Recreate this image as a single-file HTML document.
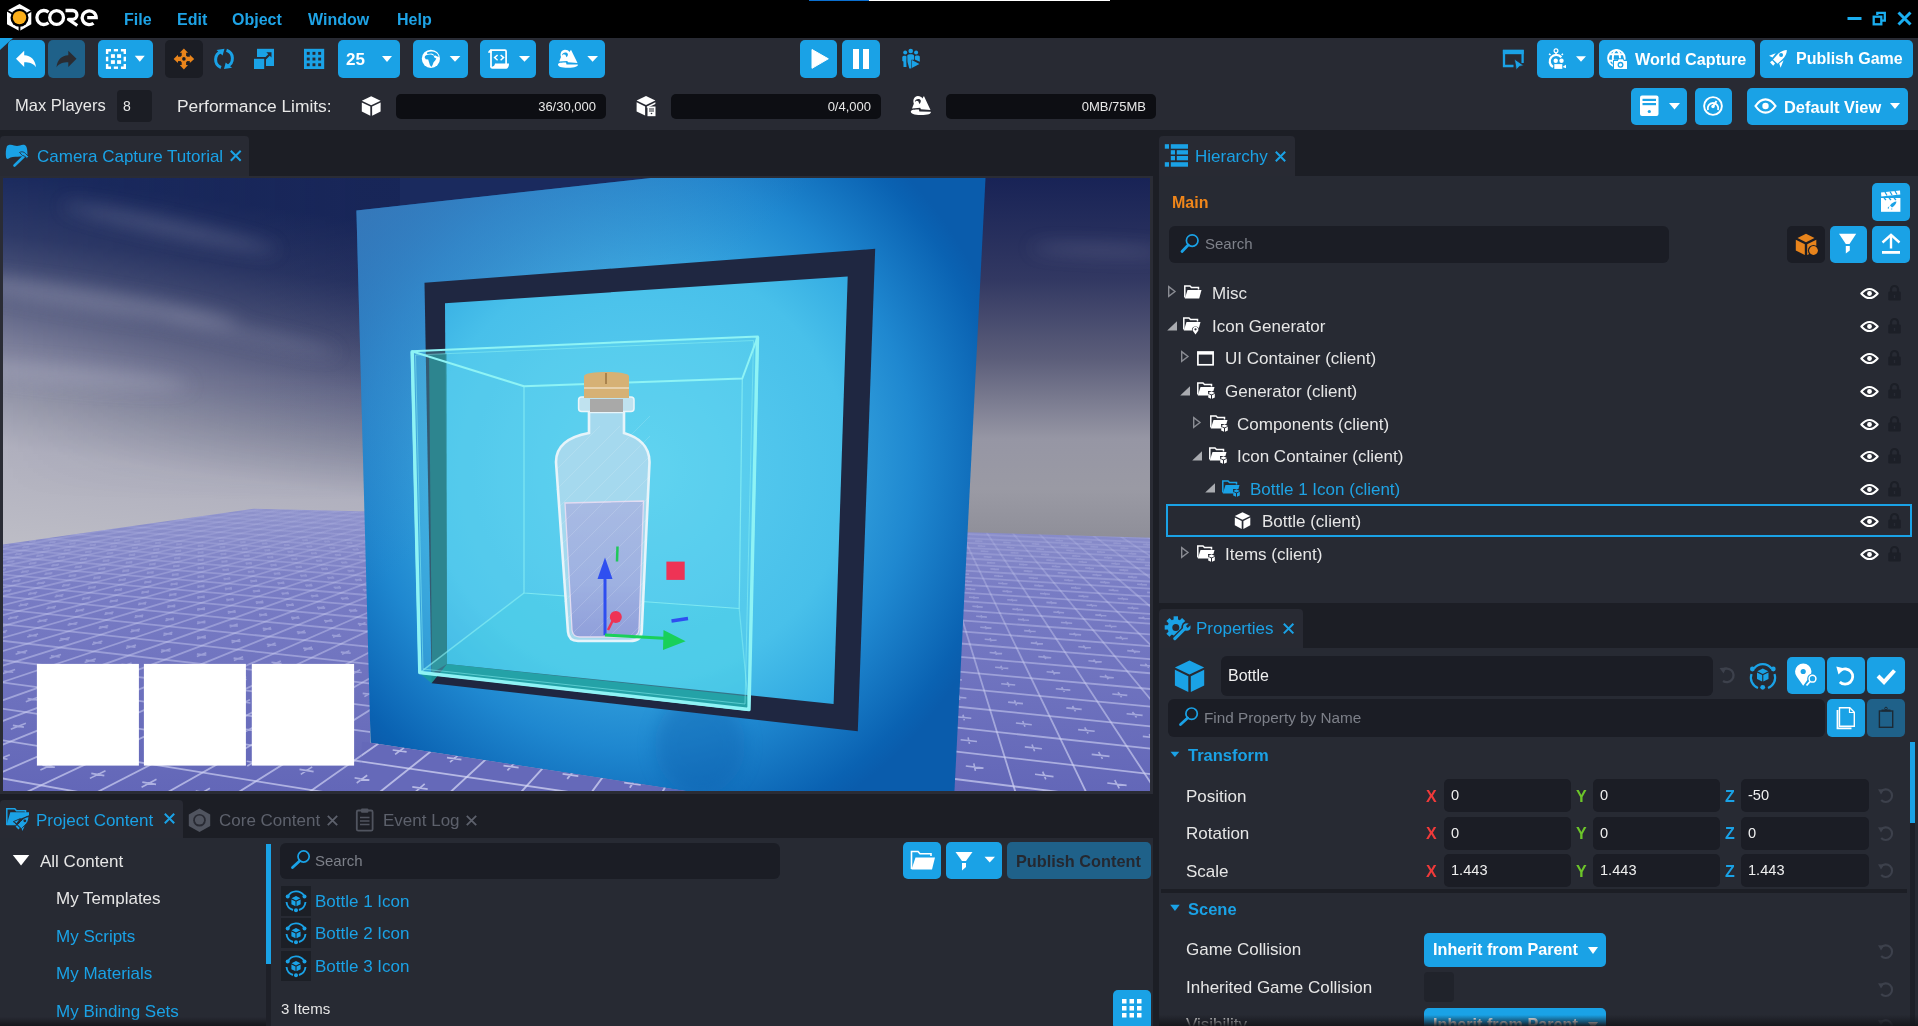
<!DOCTYPE html>
<html><head><meta charset="utf-8">
<style>
*{box-sizing:border-box;margin:0;padding:0}
html,body{width:1918px;height:1026px;overflow:hidden;background:#1c1e25;font-family:"Liberation Sans",sans-serif;color:#e8e8e8}
.a{position:absolute}
.t{position:absolute;white-space:pre;line-height:1;will-change:transform}
.btn{position:absolute;background:#1aa2e6;border-radius:5px}
.blue{color:#1ea3e4}
svg{position:absolute;overflow:visible}
.tri{position:absolute;width:0;height:0;border-left:5.5px solid transparent;border-right:5.5px solid transparent;border-top:6px solid #fff}
</style></head><body>
<!-- MENU BAR -->
<div class="a" style="left:0;top:0;width:1918px;height:38px;background:#000"></div>
<div class="a" style="left:809px;top:0;width:60px;height:1px;background:#0a6fd0"></div>
<div class="a" style="left:869px;top:0;width:241px;height:1px;background:#fff"></div>

<!-- TOOLBAR -->
<div class="a" style="left:0;top:38px;width:1918px;height:92px;background:#282a33"></div>


<!-- LOGO -->
<svg style="left:0;top:0" width="110" height="38" viewBox="0 0 110 38">
 <polygon points="19.5,4 31.3,10.7 31.3,24.3 19.5,31 7,24.3 7,10.7" fill="#fff"/>
 <circle cx="19.5" cy="17.8" r="9" fill="#000"/>
 <path d="M19.5 17.8 L19.5 32 M19.5 17.8 L6 10 M19.5 17.8 L33 10" stroke="#000" stroke-width="1.8"/>
 <circle cx="19.5" cy="17.6" r="6.7" fill="#fdb01a"/>
 <path d="M48.5 12.2 A7 7 0 1 0 48.5 22.8" fill="none" stroke="#fff" stroke-width="3.3"/>
 <circle cx="56.6" cy="17.5" r="6.9" fill="none" stroke="#fff" stroke-width="3.3"/>
 <path d="M65.5 10.5 L72.5 10.5 A4.3 4.3 0 0 1 72.5 19.3 L68.5 19.3 L77.3 25.5" fill="none" stroke="#fff" stroke-width="3.3" stroke-linejoin="round"/>
 <path d="M87.2 17.6 L96.2 17.6 A7 6.9 0 1 0 93.5 23.2" fill="none" stroke="#fff" stroke-width="3.3"/>
</svg>
<div class="t" style="left:124px;top:12px;font-size:16px;font-weight:bold;color:#1ea3e6">File</div>
<div class="t" style="left:177px;top:12px;font-size:16px;font-weight:bold;color:#1ea3e6">Edit</div>
<div class="t" style="left:232px;top:12px;font-size:16px;font-weight:bold;color:#1ea3e6">Object</div>
<div class="t" style="left:308px;top:12px;font-size:16px;font-weight:bold;color:#1ea3e6">Window</div>
<div class="t" style="left:397px;top:12px;font-size:16px;font-weight:bold;color:#1ea3e6">Help</div>
<!-- window controls -->
<svg style="left:1840px;top:8px" width="78" height="22" viewBox="1840 8 78 22">
 <rect x="1847.5" y="17" width="14" height="3" fill="#1aaef0"/>
 <path d="M1877.3 15 L1877.3 12.8 L1884.8 12.8 L1884.8 20.6 L1882 20.6" fill="none" stroke="#1aaef0" stroke-width="2.3"/>
 <rect x="1873.7" y="16.7" width="7.6" height="7.6" fill="none" stroke="#1aaef0" stroke-width="2.3"/>
 <path d="M1898.5 12.5 L1910.5 24.5 M1910.5 12.5 L1898.5 24.5" stroke="#1aaef0" stroke-width="3"/>
</svg>

<!-- small blue corner -->
<svg style="left:0;top:38px" width="14" height="14"><polygon points="0,0 13,0 0,12" fill="#1aa2e6"/></svg>

<!-- ROW 1 -->
<div class="btn" style="left:8px;top:40px;width:37px;height:38px"></div>
<svg style="left:8px;top:40px" width="37" height="38" viewBox="8 40 37 38"><path d="M16 58.8 L24.2 50.8 L24.2 55.3 C31 55.6 35.2 60 36 67.2 C33.2 63.3 29.5 62.3 24.2 62.3 L24.2 66.9 Z" fill="#fff"/></svg>
<div class="btn" style="left:48px;top:40px;width:37px;height:38px;background:#1f6189"></div>
<svg style="left:48px;top:40px" width="37" height="38" viewBox="48 40 37 38"><path d="M76.5 58.8 L68.3 50.8 L68.3 55.3 C61.5 55.6 57.3 60 56.5 67.2 C59.3 63.3 63 62.3 68.3 62.3 L68.3 66.9 Z" fill="#2a2c32"/></svg>

<div class="btn" style="left:98px;top:40px;width:55px;height:38px"></div>
<svg style="left:98px;top:40px" width="55" height="38" viewBox="98 40 55 38">
 <g fill="#fff">
  <path d="M105.9 49 L111 49 L111 51.4 L108.3 51.4 L108.3 54 L105.9 54 Z"/>
  <path d="M126 49 L120.9 49 L120.9 51.4 L123.6 51.4 L123.6 54 L126 54 Z"/>
  <path d="M105.9 68.9 L111 68.9 L111 66.5 L108.3 66.5 L108.3 63.9 L105.9 63.9 Z"/>
  <path d="M126 68.9 L120.9 68.9 L120.9 66.5 L123.6 66.5 L123.6 63.9 L126 63.9 Z"/>
  <rect x="113.8" y="49" width="4.2" height="2.4"/><rect x="113.8" y="66.5" width="4.2" height="2.4"/>
  <rect x="105.9" y="56.7" width="2.4" height="4.6"/><rect x="123.6" y="56.7" width="2.4" height="4.6"/>
  <rect x="110.9" y="54.2" width="4" height="3.7"/><rect x="117.1" y="54.2" width="4" height="3.7"/>
  <rect x="110.9" y="60.2" width="4" height="3.7"/><rect x="117.1" y="60.2" width="4" height="3.7"/>
 </g>
 <polygon points="134.8,55.8 144.8,55.8 139.8,61.7" fill="#fff"/>
</svg>

<div class="a" style="left:165px;top:40px;width:38px;height:38px;background:#1b1d24;border-radius:5px"></div>
<svg style="left:165px;top:40px" width="38" height="38" viewBox="165 40 38 38">
 <g fill="#ea851b">
  <rect x="181.7" y="52" width="4.4" height="14"/><rect x="177" y="56.7" width="14" height="4.4"/>
  <polygon points="183.9,48.4 188,52.8 179.8,52.8"/><polygon points="183.9,69.4 188,65 179.8,65"/>
  <polygon points="173.6,58.9 178,54.8 178,63"/><polygon points="194.2,58.9 189.8,54.8 189.8,63"/>
  <circle cx="183.9" cy="58.9" r="3.6"/>
 </g>
 <circle cx="183.9" cy="58.9" r="1.8" fill="#1b1d24"/>
</svg>
<svg style="left:210px;top:45px" width="30" height="30" viewBox="210 45 30 30">
 <g fill="none" stroke="#1aa2e6" stroke-width="3">
  <path d="M221.5 51.5 A8.5 8.5 0 0 0 221 67.5"/>
  <path d="M226.5 50.3 A8.5 8.5 0 0 1 227 66.3"/>
 </g>
 <polygon points="216.5,50 224.5,48.8 222.6,55.5" fill="#1aa2e6"/>
 <polygon points="232,67.8 224,69 225.7,62.5" fill="#1aa2e6"/>
</svg>
<svg style="left:250px;top:45px" width="30" height="30" viewBox="250 45 30 30">
 <rect x="257" y="48.8" width="17" height="17.2" fill="#1aa2e6"/>
 <rect x="252.5" y="57" width="13.5" height="13.5" fill="#282a33"/>
 <rect x="254" y="58.8" width="10.2" height="10.2" fill="#1aa2e6"/>
 <path d="M265.5 58.5 L270 54" stroke="#282a33" stroke-width="2.2"/>
 <polygon points="271.5,52.3 271.5,57.5 266.3,52.3" fill="#282a33"/>
</svg>
<svg style="left:300px;top:45px" width="30" height="30" viewBox="300 45 30 30">
 <rect x="304" y="48.8" width="20.2" height="20.2" fill="#1aa2e6"/>
 <g fill="#282a33">
 <rect x="306.8" y="51.9" width="2.9" height="2.9"/><rect x="312.5" y="51.9" width="2.9" height="2.9"/><rect x="318.2" y="51.9" width="2.9" height="2.9"/>
 <rect x="306.8" y="57.6" width="2.9" height="2.9"/><rect x="312.5" y="57.6" width="2.9" height="2.9"/><rect x="318.2" y="57.6" width="2.9" height="2.9"/>
 <rect x="306.8" y="63.3" width="2.9" height="2.9"/><rect x="312.5" y="63.3" width="2.9" height="2.9"/><rect x="318.2" y="63.3" width="2.9" height="2.9"/>
 </g>
</svg>

<div class="btn" style="left:338px;top:40px;width:62px;height:38px"></div>
<div class="t" style="left:345.5px;top:51px;font-size:17px;font-weight:bold;color:#fff">25</div>
<div class="tri" style="left:382px;top:56px"></div>

<div class="btn" style="left:413px;top:40px;width:55px;height:38px"></div>
<svg style="left:413px;top:40px" width="55" height="38" viewBox="413 40 55 38">
 <circle cx="430.9" cy="58.8" r="9.1" fill="#fff"/>
 <path d="M424.6 57.2 C425 55.2 427.5 54.3 431 54.6 L433.6 55.6 L434.3 57.6 L436.3 58.6 L435.2 60.5 L433.6 62.2 L432.6 65 L431.4 67 L429.9 65 L428.8 61.5 L428.2 59.6 L425.7 59.3 Z" fill="#1aa2e6"/>
 <path d="M427 52.6 C429.5 51.3 433 51 435.5 52.5 C437.2 53.5 438.3 55 438.8 56.8 L437.2 56.5 L435.6 55.5 L434 55.8 L433.4 54.2 L431.5 53.6 L427.2 54 Z" fill="#1aa2e6"/>
 <polygon points="449.7,56 460.4,56 455,61.8" fill="#fff"/>
</svg>

<div class="btn" style="left:480px;top:40px;width:56px;height:38px"></div>
<svg style="left:480px;top:40px" width="56" height="38" viewBox="480 40 56 38">
 <path d="M491 67 L491 50.2 L505 50.2 C505.8 50.2 506.1 50.6 506.1 51.4 L506.1 64" fill="none" stroke="#fff" stroke-width="1.7"/>
 <path d="M488 52.8 C488.3 50.8 489.5 49.4 491.5 49.4 L491.5 52.8 Z" fill="#fff"/>
 <path d="M495 63.4 L509 63.4 C509 66.5 508 68.8 505.5 68.8 L492.5 68.8 C491 68.8 490.2 67.8 490.2 66.5 C492 67 494.8 66.5 495 63.4 Z" fill="#fff"/>
 <path d="M497.6 55 L494.6 57.6 L497.6 60.2 M500.6 55 L503.6 57.6 L500.6 60.2" fill="none" stroke="#fff" stroke-width="1.5"/>
 <polygon points="519,56 530,56 524.5,61.8" fill="#fff"/>
</svg>

<div class="btn" style="left:549px;top:40px;width:56px;height:38px"></div>
<svg style="left:549px;top:40px" width="56" height="38" viewBox="549 40 56 38">
 <path d="M559.2 61.6 L561 57 C559.7 53.5 561.5 49.8 565 49.8 C567.2 49.8 568.6 50.7 569.4 52 L571 49.8 L577.5 63 L568 62.3 L567.3 61 Z" fill="#fff"/>
 <path d="M562 55.5 C562 52.5 566.5 51.5 567.8 53.8 C568.2 55 567.5 56.5 566.5 57.3 L565.4 54.7 L563.5 54.2 Z" fill="#1aa2e6"/>
 <path d="M558 64.5 C558 62.8 562 62.6 566 62.6 L566.5 64.5 L577.8 64.6 C578.5 66.5 575 67.8 568 67.8 C561 67.8 558 66.5 558 64.5 Z" fill="#fff"/>
 <polygon points="587.3,56 598,56 592.6,61.8" fill="#fff"/>
</svg>

<!-- play/pause -->
<div class="btn" style="left:800px;top:40px;width:37px;height:38px"></div>
<svg style="left:800px;top:40px" width="37" height="38" viewBox="800 40 37 38"><path d="M812 49.5 L828.3 58.8 L812 68.3 Z" fill="#fff" stroke="#fff" stroke-width="1" stroke-linejoin="round"/></svg>
<div class="btn" style="left:842px;top:40px;width:38px;height:38px"></div>
<div class="a" style="left:853px;top:49px;width:5.6px;height:20px;background:#fff"></div>
<div class="a" style="left:863.2px;top:49px;width:5.8px;height:20px;background:#fff"></div>
<svg style="left:900px;top:47px" width="24" height="24" viewBox="900 47 24 24">
 <g fill="#1aa2e6">
  <circle cx="905.2" cy="52.6" r="2"/><circle cx="910.7" cy="51" r="2.3"/><circle cx="916.1" cy="52.6" r="2"/>
  <path d="M902.3 57 C902.3 55.6 906.2 55.2 906.5 56.4 L906.3 61.5 L906.5 67 L903.5 67 L903.4 61.5 L902.3 61 Z"/>
  <path d="M907.3 55.5 C907.8 53.8 913.5 53.8 914 55.5 L914 59.8 L911.3 59.8 L911.3 68.5 L909.3 68.5 L907.5 62 Z"/>
  <path d="M914.8 56.5 C915 55 919.5 55 919.8 56.5 L919.8 61.8 L914.8 59.5 Z"/>
  <polygon points="911.8,60 919.4,64.1 911.8,68.1"/>
 </g>
</svg>

<!-- right toolbar -->
<svg style="left:1500px;top:47px" width="28" height="26" viewBox="1500 47 28 26">
 <path d="M1513.5 66 L1504 66 L1504 51 L1522.6 51 L1522.6 63" fill="none" stroke="#1aa2e6" stroke-width="2.3" stroke-linejoin="miter"/>
 <rect x="1502.9" y="49.9" width="20.8" height="4.3" fill="#1aa2e6"/>
 <path d="M1514.4 59 L1523.8 65.6 L1519.4 66.4 L1516.3 69.9 Z" fill="#1aa2e6" stroke="#282a33" stroke-width="0.8"/>
</svg>
<div class="btn" style="left:1537px;top:40px;width:57px;height:38px"></div>
<svg style="left:1537px;top:40px" width="57" height="38" viewBox="1537 40 57 38">
 <circle cx="1556" cy="50.7" r="1.9" fill="none" stroke="#fff" stroke-width="1.2"/>
 <path d="M1556 52.6 L1556 55" stroke="#fff" stroke-width="1.5"/>
 <path d="M1561.3 57.3 A6.5 6.5 0 1 0 1553 67" fill="none" stroke="#fff" stroke-width="2.3"/>
 <path d="M1549 53.8 L1550.6 54.8 M1563 53.8 L1561.6 54.8" stroke="#fff" stroke-width="1.5"/>
 <circle cx="1555.7" cy="60.7" r="2.2" fill="#fff"/><circle cx="1561.5" cy="60.7" r="2.2" fill="#fff"/>
 <rect x="1554.3" y="64.1" width="8" height="4.8" fill="#fff"/><polygon points="1563.2,66.2 1566,64.8 1566,68.2 1563.2,67.2" fill="#fff"/>
 <polygon points="1576,56.2 1586,56.2 1581,61.7" fill="#fff"/>
</svg>

<div class="btn" style="left:1599px;top:40px;width:156px;height:38px"></div>
<svg style="left:1599px;top:40px" width="40" height="38" viewBox="1599 40 40 38">
 <g fill="none" stroke="#fff" stroke-width="1.9">
  <circle cx="1616.4" cy="58.3" r="8.3"/>
  <ellipse cx="1616.4" cy="58.3" rx="3.6" ry="8.3"/>
  <path d="M1608.8 54.3 L1624 54.3 M1608.3 60.8 L1624.5 60.8"/>
 </g>
 <path d="M1613 70 L1613 60 L1617 60 L1618 58.3 L1623.6 58.3 L1624.6 60 L1628 60 L1628 70 Z" fill="#1aa2e6"/>
 <path d="M1614 69 L1614 61.3 C1614 61.1 1614.1 61 1614.3 61 L1617.8 61 L1618.6 59.3 L1623 59.3 L1623.8 61 L1626.6 61 C1626.8 61 1627 61.1 1627 61.3 L1627 69 Z" fill="#fff"/>
 <circle cx="1620.5" cy="64.8" r="2.3" fill="none" stroke="#1aa2e6" stroke-width="1.3"/>
</svg>
<div class="t" style="left:1635px;top:51.3px;font-size:16.2px;font-weight:bold;color:#fff">World Capture</div>

<div class="btn" style="left:1760px;top:40px;width:153px;height:38px"></div>
<svg style="left:1760px;top:40px" width="36" height="38" viewBox="1760 40 36 38">
 <path d="M1786.8 50 C1784 50 1780 51.5 1777 55 L1773 59.5 L1777.5 63.8 L1782 59.8 C1785.5 56.5 1787 53 1786.8 50 Z" fill="#fff"/>
 <circle cx="1781.1" cy="55" r="2" fill="#1aa2e6"/>
 <path d="M1769 55.8 L1775.8 53.2 L1772.5 57.5 Z M1783.6 60.2 L1780.6 67.7 L1779.2 63.6 Z" fill="#fff"/>
 <polygon points="1770,62.3 1772.2,60.6 1775,63.5 1773.2,65.8" fill="#fff"/>
</svg>
<div class="t" style="left:1796px;top:51px;font-size:16px;font-weight:bold;color:#fff">Publish Game</div>

<!-- ROW 2 -->
<div class="t" style="left:15px;top:97px;font-size:16.5px;color:#e8e8e8">Max Players</div>
<div class="a" style="left:117px;top:90px;width:35px;height:32px;background:#1b1d24;border-radius:4px"></div>
<div class="t" style="left:123px;top:99px;font-size:14px;color:#e8e8e8">8</div>
<div class="t" style="left:177px;top:97.5px;font-size:17.4px;color:#e8e8e8">Performance Limits:</div>
<svg style="left:360px;top:94px" width="24" height="24" viewBox="360 94 24 24">
 <polygon points="371.2,96.2 380.6,100.8 371.2,105.2 361.8,100.8" fill="#fff"/>
 <polygon points="361.8,102.5 370.3,106.6 370.3,115.8 361.8,111.6" fill="#fff"/>
 <polygon points="380.6,102.5 372.1,106.6 372.1,115.8 380.6,111.6" fill="#fff"/>
</svg>
<div class="a" style="left:396px;top:94px;width:210px;height:25px;background:#0d0e13;border-radius:5px"></div>
<div class="t" style="left:396px;top:100px;width:200px;text-align:right;font-size:13px;color:#e8e8e8">36/30,000</div>
<svg style="left:634px;top:94px" width="24" height="24" viewBox="634 94 24 24">
 <polygon points="646,96 655.4,100.6 646,105 636.6,100.6" fill="#fff"/>
 <polygon points="636.6,102.3 645.1,106.4 645.1,115.6 636.6,111.4" fill="#fff"/>
 <polygon points="655.4,102.3 646.9,106.4 646.9,108 655.4,104" fill="#fff"/>
 <rect x="647.5" y="106.5" width="8" height="9.7" fill="#fff"/>
 <rect x="649" y="108.5" width="5" height="1" fill="#282a33"/><rect x="649" y="110.5" width="5" height="1" fill="#282a33"/>
 <circle cx="651.5" cy="113.5" r="0.8" fill="#282a33"/>
</svg>
<div class="a" style="left:671px;top:94px;width:210px;height:25px;background:#0d0e13;border-radius:5px"></div>
<div class="t" style="left:671px;top:100px;width:200px;text-align:right;font-size:13px;color:#e8e8e8">0/4,000</div>
<svg style="left:908px;top:94px" width="26" height="24" viewBox="908 94 26 24">
 <g transform="translate(910.7 96.1) scale(1.01 1.05) translate(-557.9 -49.8)">
 <path d="M559.2 61.6 L561 57 C559.7 53.5 561.5 49.8 565 49.8 C567.2 49.8 568.6 50.7 569.4 52 L571 49.8 L577.5 63 L568 62.3 L567.3 61 Z" fill="#fff"/>
 <path d="M562 55.5 C562 52.5 566.5 51.5 567.8 53.8 C568.2 55 567.5 56.5 566.5 57.3 L565.4 54.7 L563.5 54.2 Z" fill="#282a33"/>
 <path d="M558 64.5 C558 62.8 562 62.6 566 62.6 L566.5 64.5 L577.8 64.6 C578.5 66.5 575 67.8 568 67.8 C561 67.8 558 66.5 558 64.5 Z" fill="#fff"/>
 </g>
</svg>
<div class="a" style="left:946px;top:94px;width:210px;height:25px;background:#0d0e13;border-radius:5px"></div>
<div class="t" style="left:946px;top:100px;width:200px;text-align:right;font-size:13px;color:#e8e8e8">0MB/75MB</div>

<div class="btn" style="left:1631px;top:88px;width:56px;height:37px"></div>
<svg style="left:1631px;top:88px" width="56" height="37" viewBox="1631 88 56 37">
 <rect x="1640" y="95.5" width="18.5" height="20.5" rx="2" fill="#fff"/>
 <rect x="1642.5" y="98.8" width="13.5" height="2.2" fill="#1aa2e6"/>
 <rect x="1642.5" y="103" width="13.5" height="2.2" fill="#1aa2e6"/>
 <circle cx="1649.3" cy="111.5" r="1.6" fill="#1aa2e6"/>
 <polygon points="1669,103 1680,103 1674.5,109.5" fill="#fff"/>
</svg>
<div class="btn" style="left:1695px;top:88px;width:37px;height:37px"></div>
<svg style="left:1695px;top:88px" width="37" height="37" viewBox="1695 88 37 37">
 <circle cx="1713" cy="106" r="8.9" fill="none" stroke="#fff" stroke-width="1.9"/>
 <path d="M1708 110 A5.3 5.3 0 1 1 1718 110" fill="none" stroke="#fff" stroke-width="1.9"/>
 <path d="M1713 106.5 L1716.5 101" stroke="#fff" stroke-width="2"/>
 <circle cx="1713" cy="106.5" r="1.7" fill="#fff"/>
</svg>
<div class="btn" style="left:1747px;top:88px;width:161px;height:37px"></div>
<svg style="left:1747px;top:88px" width="40" height="37" viewBox="1747 88 40 37">
 <path d="M1755.5 106 C1759 100.8 1762.5 99.3 1765.5 99.3 C1768.5 99.3 1772 100.8 1775.5 106 C1772 111.2 1768.5 112.7 1765.5 112.7 C1762.5 112.7 1759 111.2 1755.5 106 Z" fill="none" stroke="#fff" stroke-width="2.2"/>
 <circle cx="1765.5" cy="106" r="3.2" fill="#fff"/>
</svg>
<div class="t" style="left:1783.5px;top:99px;font-size:16.4px;font-weight:bold;color:#fff">Default View</div>
<div class="tri" style="left:1889.5px;top:103px"></div>

<!-- TAB BAR + PANELS -->
<div class="a" id="vp-tab" style="left:0;top:136px;width:249px;height:41px;background:#282a33;border-radius:4px 4px 0 0"></div>
<div class="a" style="left:0;top:176px;width:1153px;height:618px;background:#2a2c35"></div>

<div class="a" style="left:1159px;top:136px;width:136px;height:41px;background:#282a33;border-radius:4px 4px 0 0"></div>
<div class="a" style="left:1159px;top:176px;width:759px;height:427px;background:#272a33"></div>

<div class="a" style="left:1159px;top:609px;width:144px;height:40px;background:#282a33;border-radius:4px 4px 0 0"></div>
<div class="a" style="left:1159px;top:648px;width:759px;height:378px;background:#272a33"></div>

<div class="a" style="left:0;top:800px;width:183px;height:39px;background:#282a33;border-radius:4px 4px 0 0"></div>
<div class="a" style="left:0;top:838px;width:1153px;height:188px;background:#272a33"></div>
<!-- VIEWPORT -->
<svg style="left:3px;top:178px;overflow:hidden" width="1147" height="613" viewBox="3 178 1147 613">
 <defs>
  <linearGradient id="sky" x1="60" y1="178" x2="9" y2="545" gradientUnits="userSpaceOnUse">
   <stop offset="0" stop-color="#1a2a5e"/>
   <stop offset="0.17" stop-color="#2e3a68"/>
   <stop offset="0.32" stop-color="#535a7e"/>
   <stop offset="0.46" stop-color="#7b7e9a"/>
   <stop offset="0.605" stop-color="#9698aa"/>
   <stop offset="0.74" stop-color="#b0b0be"/>
   <stop offset="1" stop-color="#bdbdc6"/>
  </linearGradient>
  <linearGradient id="skyDark" x1="0" y1="0" x2="360" y2="0" gradientUnits="userSpaceOnUse">
   <stop offset="0" stop-color="#141c4a" stop-opacity="0"/>
   <stop offset="1" stop-color="#141c4a" stop-opacity="0.28"/>
  </linearGradient>
  <linearGradient id="skyDarkV" x1="0" y1="178" x2="0" y2="500" gradientUnits="userSpaceOnUse">
   <stop offset="0" stop-color="#fff"/>
   <stop offset="0.6" stop-color="#fff"/>
   <stop offset="1" stop-color="#000"/>
  </linearGradient>
  <mask id="mDark"><rect x="0" y="178" width="400" height="400" fill="url(#skyDarkV)"/></mask>
  <linearGradient id="skyR" x1="0" y1="178" x2="0" y2="540" gradientUnits="userSpaceOnUse">
   <stop offset="0" stop-color="#182356"/>
   <stop offset="0.28" stop-color="#323862"/>
   <stop offset="0.5" stop-color="#5c5e7a"/>
   <stop offset="0.72" stop-color="#9696a4"/>
   <stop offset="0.86" stop-color="#9a9aa4"/>
   <stop offset="1" stop-color="#8e8e98"/>
  </linearGradient>
  <linearGradient id="gnd" x1="0" y1="505" x2="0" y2="791" gradientUnits="userSpaceOnUse">
   <stop offset="0" stop-color="#9094cc"/>
   <stop offset="0.3" stop-color="#787cc4"/>
   <stop offset="1" stop-color="#6367b8"/>
  </linearGradient>
  <radialGradient id="panel" cx="640" cy="460" r="380" gradientUnits="userSpaceOnUse" gradientTransform="translate(640 460) scale(1 1.05) translate(-640 -460)">
   <stop offset="0" stop-color="#5ccdf0"/>
   <stop offset="0.4" stop-color="#40b2e6"/>
   <stop offset="0.72" stop-color="#1f88d0"/>
   <stop offset="0.95" stop-color="#0a62b2"/>
   <stop offset="1" stop-color="#0a5cac"/>
  </radialGradient>
  <linearGradient id="panelTL" x1="356" y1="200" x2="560" y2="420" gradientUnits="userSpaceOnUse">
   <stop offset="0" stop-color="#4a84bf" stop-opacity="0.7"/>
   <stop offset="1" stop-color="#4a84bf" stop-opacity="0"/>
  </linearGradient>
  <radialGradient id="inner" cx="640" cy="470" r="300" gradientUnits="userSpaceOnUse">
   <stop offset="0" stop-color="#5ccff0"/>
   <stop offset="0.7" stop-color="#48c0ea"/>
   <stop offset="1" stop-color="#2fa6e0"/>
  </radialGradient>
  <clipPath id="gclip"><polygon points="3,544.4 253.6,508.7 370,511.5 370,791 3,791"/><polygon points="960,532 1150,537.7 1150,791 950,791"/></clipPath><clipPath id="gclip2"><polygon points="370.6,742.7 700,793 360,793 362,742"/></clipPath>
  <linearGradient id="gfade" x1="0" y1="505" x2="0" y2="791" gradientUnits="userSpaceOnUse"><stop offset="0" stop-color="#c8cbf0" stop-opacity="0.1"/><stop offset="0.3" stop-color="#c8cbf0" stop-opacity="0.35"/><stop offset="1" stop-color="#d0d3f4" stop-opacity="0.7"/></linearGradient>
  <linearGradient id="liq" x1="0" y1="501" x2="0" y2="637" gradientUnits="userSpaceOnUse"><stop offset="0" stop-color="#a8b8e2"/><stop offset="0.6" stop-color="#9eaee0"/><stop offset="1" stop-color="#8e9ad8"/></linearGradient>
  <filter id="blur2" x="-50%" y="-200%" width="200%" height="500%"><feGaussianBlur stdDeviation="9"/></filter>
  <filter id="blur1"><feGaussianBlur stdDeviation="0.7"/></filter>
  <pattern id="grid" width="46" height="46" patternUnits="userSpaceOnUse" patternTransform="translate(0 700) scale(1 0.42) rotate(38)">
   <rect width="46" height="46" fill="none"/>
   <path d="M0 0 L46 0 M0 0 L0 46" stroke="#c9cdf0" stroke-width="2.6" stroke-opacity="0.75"/>
   <path d="M19 23 L27 23 M23 19 L23 27" stroke="#c9cdf0" stroke-width="2" stroke-opacity="0.5"/>
  </pattern>
  <pattern id="gridR" width="60" height="60" patternUnits="userSpaceOnUse" patternTransform="translate(960 520) scale(1 0.5) rotate(-28)">
   <path d="M0 0 L60 0 M0 0 L0 60" stroke="#d0d3f2" stroke-width="3" stroke-opacity="0.75"/>
   <path d="M24 30 L36 30 M30 24 L30 36" stroke="#d0d3f2" stroke-width="2.2" stroke-opacity="0.55"/>
  </pattern>
 </defs>
 <rect x="3" y="178" width="1147" height="613" fill="url(#sky)"/>
 <rect x="3" y="178" width="400" height="400" fill="url(#skyDark)" mask="url(#mDark)"/>
 <rect x="960" y="178" width="190" height="613" fill="url(#skyR)"/>
 <!-- clouds -->
 <g filter="url(#blur2)" fill="#c4c4d6">
  <ellipse cx="170" cy="228" rx="110" ry="7" transform="rotate(12 170 228)" opacity="0.25"/>
  <ellipse cx="90" cy="300" rx="150" ry="10" transform="rotate(9 90 300)" opacity="0.3"/>
  <ellipse cx="70" cy="375" rx="120" ry="9" transform="rotate(5 70 375)" opacity="0.3"/>
  <ellipse cx="250" cy="335" rx="90" ry="6" transform="rotate(12 250 335)" opacity="0.2"/>
  <ellipse cx="1100" cy="250" rx="70" ry="3.5" transform="rotate(2 1100 250)" opacity="0.3"/>
 </g>
 <!-- ground -->
 <polygon points="3,544.4 253.6,508.7 370,511.5 370,791 3,791" fill="url(#gnd)"/>
 <polygon points="960,532 1150,537.7 1150,791 950,791" fill="url(#gnd)"/>
 <g clip-path="url(#gclip)" fill="none" stroke="url(#gfade)" filter="url(#blur1)">
  <path d="M-5712.9 500L-14876.8 800.0M-5643.6 500L-14626.8 800.0M-5574.3 500L-14376.8 800.0M-5505.0 500L-14126.8 800.0M-5435.8 500L-13876.8 800.0M-5366.5 500L-13626.8 800.0M-5297.2 500L-13376.8 800.0M-5227.9 500L-13126.8 800.0M-5158.6 500L-12876.8 800.0M-5089.4 500L-12626.8 800.0M-5020.1 500L-12376.8 800.0M-4950.8 500L-12126.8 800.0M-4881.5 500L-11876.8 800.0M-4812.3 500L-11626.8 800.0M-4743.0 500L-11376.8 800.0M-4673.7 500L-11126.8 800.0M-4604.4 500L-10876.8 800.0M-4535.1 500L-10626.8 800.0M-4465.9 500L-10376.8 800.0M-4396.6 500L-10126.8 800.0M-4327.3 500L-9876.8 800.0M-4258.0 500L-9626.8 800.0M-4188.8 500L-9376.8 800.0M-4119.5 500L-9126.8 800.0M-4050.2 500L-8876.8 800.0M-3980.9 500L-8626.8 800.0M-3911.7 500L-8376.8 800.0M-3842.4 500L-8126.8 800.0M-3773.1 500L-7876.8 800.0M-3703.8 500L-7626.8 800.0M-3634.5 500L-7376.8 800.0M-3565.3 500L-7126.8 800.0M-3496.0 500L-6876.8 800.0M-3426.7 500L-6626.8 800.0M-3357.4 500L-6376.8 800.0M-3288.2 500L-6126.8 800.0M-3218.9 500L-5876.8 800.0M-3149.6 500L-5626.8 800.0M-3080.3 500L-5376.8 800.0M-3011.1 500L-5126.8 800.0M-2941.8 500L-4876.8 800.0M-2872.5 500L-4626.8 800.0M-2803.2 500L-4376.8 800.0M-2733.9 500L-4126.8 800.0M-2664.7 500L-3876.8 800.0M-2595.4 500L-3626.8 800.0M-2526.1 500L-3376.8 800.0M-2456.8 500L-3126.8 800.0M-2387.6 500L-2876.8 800.0M-2318.3 500L-2626.8 800.0M-2249.0 500L-2376.8 800.0M-2179.7 500L-2126.8 800.0M-2110.5 500L-1876.8 800.0M-2041.2 500L-1626.8 800.0M-1971.9 500L-1376.8 800.0M-1902.6 500L-1126.8 800.0M-1833.3 500L-876.8 800.0M-1764.1 500L-626.8 800.0M-1694.8 500L-376.8 800.0M-1625.5 500L-126.8 800.0M-1556.2 500L123.2 800.0M-1487.0 500L373.2 800.0M-1417.7 500L623.2 800.0M-1348.4 500L873.2 800.0M-1279.1 500L1123.2 800.0M-1209.8 500L1373.2 800.0M-1140.6 500L1623.2 800.0M-1071.3 500L1873.2 800.0M-1002.0 500L2123.2 800.0M-932.7 500L2373.2 800.0M-863.5 500L2623.2 800.0M-794.2 500L2873.2 800.0M-724.9 500L3123.2 800.0M-655.6 500L3373.2 800.0M-586.4 500L3623.2 800.0M-517.1 500L3873.2 800.0M-447.8 500L4123.2 800.0M-378.5 500L4373.2 800.0M-309.2 500L4623.2 800.0M-240.0 500L4873.2 800.0M-170.7 500L5123.2 800.0M-101.4 500L5373.2 800.0M-32.1 500L5623.2 800.0M37.1 500L5873.2 800.0M106.4 500L6123.2 800.0M175.7 500L6373.2 800.0M245.0 500L6623.2 800.0M314.2 500L6873.2 800.0M383.5 500L7123.2 800.0M452.8 500L7373.2 800.0M522.1 500L7623.2 800.0M591.4 500L7873.2 800.0M660.6 500L8123.2 800.0M729.9 500L8373.2 800.0M799.2 500L8623.2 800.0M868.5 500L8873.2 800.0M937.7 500L9123.2 800.0M1007.0 500L9373.2 800.0M1076.3 500L9623.2 800.0M1145.6 500L9873.2 800.0M1214.9 500L10123.2 800.0M1284.1 500L10373.2 800.0M1353.4 500L10623.2 800.0M1422.7 500L10873.2 800.0M1492.0 500L11123.2 800.0M1561.2 500L11373.2 800.0M1630.5 500L11623.2 800.0M1699.8 500L11873.2 800.0M1769.1 500L12123.2 800.0M1838.3 500L12373.2 800.0M1907.6 500L12623.2 800.0M1976.9 500L12873.2 800.0M2046.2 500L13123.2 800.0M2115.5 500L13373.2 800.0M2184.7 500L13623.2 800.0M2254.0 500L13873.2 800.0M2323.3 500L14123.2 800.0M2392.6 500L14373.2 800.0M2461.8 500L14623.2 800.0M2531.1 500L14873.2 800.0" stroke-width="1.8"/>
  <path d="M-950.0 500L-5750.1 800.0M-930.1 500L-5678.1 800.0M-910.1 500L-5606.1 800.0M-890.2 500L-5534.1 800.0M-870.2 500L-5462.1 800.0M-850.3 500L-5390.1 800.0M-830.3 500L-5318.1 800.0M-810.4 500L-5246.1 800.0M-790.4 500L-5174.1 800.0M-770.5 500L-5102.1 800.0M-750.5 500L-5030.1 800.0M-730.6 500L-4958.1 800.0M-710.6 500L-4886.1 800.0M-690.7 500L-4814.1 800.0M-670.7 500L-4742.1 800.0M-650.7 500L-4670.1 800.0M-630.8 500L-4598.1 800.0M-610.8 500L-4526.1 800.0M-590.9 500L-4454.1 800.0M-570.9 500L-4382.1 800.0M-551.0 500L-4310.1 800.0M-531.0 500L-4238.1 800.0M-511.1 500L-4166.1 800.0M-491.1 500L-4094.1 800.0M-471.2 500L-4022.1 800.0M-451.2 500L-3950.1 800.0M-431.3 500L-3878.1 800.0M-411.3 500L-3806.1 800.0M-391.4 500L-3734.1 800.0M-371.4 500L-3662.1 800.0M-351.5 500L-3590.1 800.0M-331.5 500L-3518.1 800.0M-311.6 500L-3446.1 800.0M-291.6 500L-3374.1 800.0M-271.7 500L-3302.1 800.0M-251.7 500L-3230.1 800.0M-231.8 500L-3158.1 800.0M-211.8 500L-3086.1 800.0M-191.9 500L-3014.1 800.0M-171.9 500L-2942.1 800.0M-152.0 500L-2870.1 800.0M-132.0 500L-2798.1 800.0M-112.0 500L-2726.1 800.0M-92.1 500L-2654.1 800.0M-72.1 500L-2582.1 800.0M-52.2 500L-2510.1 800.0M-32.2 500L-2438.1 800.0M-12.3 500L-2366.1 800.0M7.7 500L-2294.1 800.0M27.6 500L-2222.1 800.0M47.6 500L-2150.1 800.0M67.5 500L-2078.1 800.0M87.5 500L-2006.1 800.0M107.4 500L-1934.1 800.0M127.4 500L-1862.1 800.0M147.3 500L-1790.1 800.0M167.3 500L-1718.1 800.0M187.2 500L-1646.1 800.0M207.2 500L-1574.1 800.0M227.1 500L-1502.1 800.0M247.1 500L-1430.1 800.0M267.0 500L-1358.1 800.0M287.0 500L-1286.1 800.0M306.9 500L-1214.1 800.0M326.9 500L-1142.1 800.0M346.8 500L-1070.1 800.0M366.8 500L-998.1 800.0M386.7 500L-926.1 800.0M406.7 500L-854.1 800.0M426.7 500L-782.1 800.0M446.6 500L-710.1 800.0M466.6 500L-638.1 800.0M486.5 500L-566.1 800.0M506.5 500L-494.1 800.0M526.4 500L-422.1 800.0M546.4 500L-350.1 800.0M566.3 500L-278.1 800.0M586.3 500L-206.1 800.0M606.2 500L-134.1 800.0M626.2 500L-62.1 800.0M646.1 500L9.9 800.0M666.1 500L81.9 800.0M686.0 500L153.9 800.0M706.0 500L225.9 800.0M725.9 500L297.9 800.0M745.9 500L369.9 800.0M765.8 500L441.9 800.0M785.8 500L513.9 800.0M805.7 500L585.9 800.0M825.7 500L657.9 800.0M845.6 500L729.9 800.0M865.6 500L801.9 800.0M885.5 500L873.9 800.0M905.5 500L945.9 800.0M925.4 500L1017.9 800.0M945.4 500L1089.9 800.0M965.3 500L1161.9 800.0M985.3 500L1233.9 800.0M1005.3 500L1305.9 800.0M1025.2 500L1377.9 800.0M1045.2 500L1449.9 800.0M1065.1 500L1521.9 800.0M1085.1 500L1593.9 800.0M1105.0 500L1665.9 800.0M1125.0 500L1737.9 800.0M1144.9 500L1809.9 800.0M1164.9 500L1881.9 800.0M1184.8 500L1953.9 800.0M1204.8 500L2025.9 800.0M1224.7 500L2097.9 800.0M1244.7 500L2169.9 800.0M1264.6 500L2241.9 800.0M1284.6 500L2313.9 800.0M1304.5 500L2385.9 800.0M1324.5 500L2457.9 800.0M1344.4 500L2529.9 800.0M1364.4 500L2601.9 800.0M1384.3 500L2673.9 800.0M1404.3 500L2745.9 800.0M1424.2 500L2817.9 800.0M1444.2 500L2889.9 800.0M1464.1 500L2961.9 800.0M1484.1 500L3033.9 800.0M1504.0 500L3105.9 800.0M1524.0 500L3177.9 800.0M1544.0 500L3249.9 800.0M1563.9 500L3321.9 800.0M1583.9 500L3393.9 800.0M1603.8 500L3465.9 800.0M1623.8 500L3537.9 800.0M1643.7 500L3609.9 800.0M1663.7 500L3681.9 800.0M1683.6 500L3753.9 800.0M1703.6 500L3825.9 800.0M1723.5 500L3897.9 800.0M1743.5 500L3969.9 800.0M1763.4 500L4041.9 800.0M1783.4 500L4113.9 800.0M1803.3 500L4185.9 800.0M1823.3 500L4257.9 800.0M1843.2 500L4329.9 800.0M1863.2 500L4401.9 800.0M1883.1 500L4473.9 800.0M1903.1 500L4545.9 800.0M1923.0 500L4617.9 800.0M1943.0 500L4689.9 800.0M1962.9 500L4761.9 800.0M1982.9 500L4833.9 800.0M2002.8 500L4905.9 800.0M2022.8 500L4977.9 800.0M2042.7 500L5049.9 800.0M2062.7 500L5121.9 800.0M2082.7 500L5193.9 800.0M2102.6 500L5265.9 800.0M2122.6 500L5337.9 800.0M2142.5 500L5409.9 800.0M2162.5 500L5481.9 800.0M2182.4 500L5553.9 800.0M2202.4 500L5625.9 800.0M2222.3 500L5697.9 800.0M2242.3 500L5769.9 800.0M2262.2 500L5841.9 800.0M2282.2 500L5913.9 800.0M2302.1 500L5985.9 800.0M2322.1 500L6057.9 800.0M2342.0 500L6129.9 800.0M2362.0 500L6201.9 800.0M2381.9 500L6273.9 800.0M2401.9 500L6345.9 800.0M2421.8 500L6417.9 800.0M2441.8 500L6489.9 800.0M2461.7 500L6561.9 800.0M2481.7 500L6633.9 800.0M2501.6 500L6705.9 800.0M2521.6 500L6777.9 800.0M2541.5 500L6849.9 800.0M2561.5 500L6921.9 800.0M2581.4 500L6993.9 800.0M2601.4 500L7065.9 800.0M2621.3 500L7137.9 800.0" stroke-width="1.8"/>
  <path d="M-4.5 757.2L7.5 759.2M-7.0 761.7L9.8 754.7M42.4 765.1L54.9 767.2M40.4 769.9L56.6 762.5M91.3 773.4L104.3 775.6M89.9 778.4L105.5 770.7M142.3 782.1L156.0 784.4M141.6 787.3L156.5 779.2M195.7 791.1L210.0 793.5M195.7 796.6L209.9 788.2M12.9 725.4L23.9 727.1M10.8 729.2L25.9 723.3M56.0 732.0L67.5 733.8M54.4 736.0L69.0 729.8M100.8 738.9L112.8 740.7M99.7 743.0L113.8 736.6M147.5 746.1L159.9 748.0M146.9 750.4L160.4 743.7M196.1 753.5L209.0 755.5M196.0 758.0L208.9 751.1M246.7 761.3L260.2 763.4M247.3 766.0L259.4 758.8M299.5 769.4L313.6 771.6M300.8 774.3L312.2 766.8M354.6 777.9L369.4 780.2M356.7 783.0L367.2 775.2M412.3 786.8L427.7 789.2M415.1 792.1L424.7 783.9M-11.0 693.1L-1.1 694.5M-13.1 696.3L0.9 691.4M27.6 698.6L37.8 700.0M25.8 701.8L39.4 696.8M67.5 704.2L78.1 705.7M66.1 707.5L79.3 702.4M108.8 710.0L119.9 711.6M107.9 713.5L120.7 708.1M151.8 716.0L163.2 717.7M151.2 719.7L163.6 714.1M196.3 722.3L208.2 724.0M196.3 726.1L208.1 720.3M242.6 728.8L254.9 730.6M243.1 732.7L254.3 726.7M290.6 735.6L303.5 737.4M291.7 739.7L302.3 733.4M340.7 742.6L354.0 744.5M342.3 746.9L352.2 740.3M392.7 750.0L406.6 751.9M395.1 754.4L404.2 747.6M447.0 757.6L461.4 759.6M450.0 762.2L458.3 755.1M503.5 765.6L518.6 767.7M507.4 770.4L514.7 763.0M562.6 773.9L578.3 776.1M567.2 778.9L573.5 771.2M624.2 782.6L640.7 784.9M629.8 787.8L635.0 779.7M688.7 791.6L705.9 794.1M695.3 797.1L699.3 788.7M4.1 671.0L13.3 672.2M2.3 673.7L15.1 669.5M40.1 675.7L49.6 676.9M38.5 678.5L51.0 674.2M77.2 680.5L87.1 681.8M76.1 683.4L88.2 678.9M115.7 685.5L125.9 686.8M114.8 688.5L126.6 683.9M155.4 690.6L166.0 692.0M155.0 693.7L166.3 689.0M196.5 696.0L207.5 697.4M196.5 699.2L207.4 694.2M239.1 701.5L250.4 703.0M239.5 704.8L249.9 699.7M283.2 707.2L295.0 708.8M284.1 710.7L294.0 705.4M329.0 713.2L341.2 714.7M330.4 716.7L339.7 711.2M530.2 739.3L544.4 741.1M534.1 743.4L540.4 737.0M585.6 746.5L600.4 748.4M590.2 750.8L595.7 744.1M643.3 754.0L658.7 756.0M648.8 758.5L653.2 751.5M703.5 761.8L719.5 763.8M709.8 766.5L713.2 759.2M766.2 769.9L783.0 772.1M773.4 774.8L775.7 767.3M831.8 778.4L849.3 780.7M840.0 783.5L841.0 775.6M900.2 787.3L918.5 789.7M909.6 792.6L909.2 784.4M17.2 651.8L25.8 652.9M15.6 654.2L27.3 650.6M50.9 655.9L59.8 657.0M49.6 658.3L61.0 654.6M85.7 660.1L94.9 661.2M84.6 662.6L95.8 658.7M121.5 664.4L131.0 665.5M120.8 667.0L131.6 663.0M158.5 668.9L168.3 670.0M158.1 671.5L168.6 667.4M196.7 673.5L206.8 674.7M196.7 676.2L206.8 672.0M236.2 678.2L246.6 679.5M236.5 681.0L246.2 676.7M276.9 683.1L287.8 684.4M277.7 686.0L286.9 681.5M319.1 688.2L330.3 689.5M320.3 691.2L329.0 686.5M362.7 693.4L374.3 694.8M364.4 696.6L372.6 691.7M774.9 743.0L790.5 744.9M781.7 747.3L783.6 740.7M835.9 750.4L852.2 752.3M843.6 754.8L844.4 748.0M899.5 758.0L916.5 760.1M908.1 762.6L907.8 755.5M965.8 766.0L983.5 768.1M975.4 770.8L973.8 763.4M1035.0 774.3L1053.5 776.6M1045.8 779.4L1042.7 771.6M1107.3 783.0L1126.6 785.4M1119.3 788.3L1114.7 780.2M-2.3 631.6L5.7 632.5M-3.9 633.6L7.2 630.5M28.6 635.1L36.8 636.0M27.2 637.1L38.1 634.0M60.3 638.6L68.7 639.6M59.2 640.8L69.8 637.5M93.0 642.3L101.6 643.3M92.1 644.5L102.4 641.1M126.6 646.1L135.5 647.1M126.0 648.3L136.0 644.9M161.2 650.0L170.4 651.0M160.9 652.3L170.6 648.7M196.9 654.0L206.3 655.0M196.8 656.4L206.3 652.7M233.6 658.1L243.4 659.2M233.9 660.6L243.0 656.8M271.5 662.3L281.6 663.5M272.2 664.9L280.8 661.0M310.6 666.7L321.0 667.9M311.6 669.4L319.9 665.3M351.0 671.3L361.7 672.5M352.4 674.0L360.2 669.8M960.6 739.7L977.0 741.5M969.5 743.8L968.1 737.4M1024.8 746.9L1041.9 748.8M1034.6 751.2L1032.0 744.5M1091.7 754.4L1109.5 756.4M1102.5 758.9L1098.6 751.9M9.5 617.2L17.0 618.0M8.0 619.0L18.4 616.3M38.7 620.3L46.4 621.1M37.4 622.1L47.5 619.3M68.6 623.5L76.6 624.3M67.6 625.3L77.5 622.4M99.4 626.7L107.6 627.6M98.6 628.6L108.3 625.6M131.1 630.0L139.4 630.9M130.5 632.0L139.9 628.9M163.6 633.4L172.2 634.3M163.3 635.5L172.4 632.3M197.0 637.0L205.9 637.9M197.0 639.0L205.8 635.8M231.4 640.6L240.5 641.5M231.7 642.7L240.2 639.4M266.8 644.3L276.2 645.3M267.4 646.5L275.5 643.1M303.2 648.1L312.9 649.1M304.1 650.4L311.9 646.9M340.8 652.1L350.7 653.1M342.0 654.4L349.4 650.8M956.0 716.7L971.3 718.3M964.3 720.4L963.0 714.8M1015.9 723.0L1031.8 724.7M1025.0 726.8L1022.7 721.0M1078.1 729.6L1094.7 731.3M1088.1 733.5L1084.7 727.4M1142.8 736.4L1160.0 738.2M1153.7 740.4L1149.1 734.2M-7.1 601.8L-0.1 602.5M-8.6 603.3L1.3 600.9M19.9 604.4L27.0 605.2M18.6 606.0L28.3 603.6M47.6 607.2L54.9 607.9M46.5 608.8L56.0 606.3M76.0 610.0L83.5 610.7M75.1 611.7L84.3 609.1M105.1 612.9L112.8 613.6M104.4 614.6L113.5 611.9M135.0 615.8L142.9 616.6M134.5 617.6L143.3 614.9M165.7 618.9L173.8 619.7M165.4 620.7L173.9 617.9M197.1 622.0L205.4 622.8M197.1 623.8L205.4 621.0M229.5 625.2L238.0 626.0M229.7 627.1L237.7 624.1M262.7 628.4L271.4 629.3M263.2 630.4L270.9 627.4M296.8 631.8L305.8 632.7M297.6 633.8L305.0 630.7M331.9 635.3L341.2 636.2M333.0 637.3L340.0 634.2M368.0 638.9L377.5 639.8M369.4 641.0L376.0 637.7M952.0 696.6L966.4 698.0M959.7 699.8L958.6 694.8M1008.1 702.1L1023.0 703.6M1016.6 705.4L1014.5 700.3M1066.3 707.9L1081.7 709.4M1075.5 711.3L1072.5 706.0M1126.6 713.8L1142.6 715.4M1136.6 717.4L1132.5 711.9M3.5 590.6L10.2 591.2M2.2 592.0L11.4 589.8M29.3 593.0L36.1 593.6M28.1 594.4L37.2 592.2M55.6 595.4L62.6 596.1M54.6 596.9L63.5 594.6M82.6 598.0L89.7 598.6M81.8 599.4L90.5 597.1M110.2 600.5L117.5 601.2M109.6 602.1L118.1 599.7M138.5 603.2L146.0 603.9M138.1 604.7L146.4 602.3M167.5 605.9L175.2 606.6M167.3 607.5L175.3 605.0M197.2 608.7L205.1 609.4M197.2 610.3L205.0 607.8M227.7 611.5L235.8 612.3M227.9 613.2L235.5 610.6M259.0 614.4L267.3 615.2M259.4 616.1L266.7 613.5M291.1 617.4L299.6 618.2M291.8 619.2L298.8 616.4M324.0 620.5L332.7 621.3M325.0 622.3L331.7 619.5M357.8 623.6L366.8 624.5M359.1 625.5L365.5 622.6M948.4 678.7L962.0 680.0M955.7 681.6L954.7 677.2M1001.2 683.7L1015.2 685.0M1009.1 686.6L1007.3 682.1M1055.8 688.8L1070.3 690.1M1064.4 691.8L1061.7 687.1M1112.3 694.0L1127.3 695.4M1121.6 697.2L1118.0 692.3M-10.9 578.4L-4.7 578.9M-12.2 579.6L-3.4 577.7M13.1 580.5L19.5 581.1M11.9 581.7L20.6 579.8M37.7 582.7L44.2 583.2M36.7 583.9L45.2 582.0M62.8 584.9L69.4 585.5M61.9 586.2L70.3 584.2M88.5 587.1L95.3 587.7M87.8 588.5L96.0 586.4M114.8 589.5L121.7 590.1M114.2 590.8L122.2 588.7M141.7 591.8L148.7 592.5M141.3 593.3L149.1 591.1M169.2 594.3L176.4 594.9M169.0 595.7L176.6 593.5M197.3 596.8L204.8 597.4M197.3 598.2L204.7 596.0M226.2 599.3L233.8 600.0M226.4 600.8L233.6 598.5M255.7 601.9L263.5 602.6M256.1 603.5L263.1 601.1M286.0 604.6L294.0 605.3M286.6 606.2L293.3 603.7M317.0 607.3L325.2 608.1M317.9 609.0L324.3 606.4M348.9 610.1L357.3 610.9M350.0 611.8L356.1 609.2M945.3 662.8L958.1 664.0M952.1 665.4L951.2 661.4M995.1 667.2L1008.3 668.4M1002.5 669.9L1000.9 665.8M1046.6 671.8L1060.2 673.0M1054.6 674.5L1052.2 670.3M1099.7 676.5L1113.8 677.7M1108.3 679.3L1105.1 674.9M-1.2 569.4L4.8 569.9M-2.4 570.5L5.9 568.8M21.8 571.3L27.9 571.9M20.8 572.5L28.9 570.7M45.3 573.3L51.5 573.8M44.4 574.5L52.4 572.7M69.3 575.3L75.6 575.9M68.5 576.5L76.4 574.7M93.8 577.4L100.3 577.9M93.2 578.6L100.9 576.7M118.9 579.5L125.5 580.0M118.4 580.7L126.0 578.8M144.5 581.6L151.2 582.2M144.1 582.9L151.5 580.9M170.7 583.8L177.6 584.4M170.5 585.1L177.7 583.1M197.4 586.1L204.5 586.7M197.4 587.4L204.4 585.3M224.8 588.4L232.0 589.0M225.0 589.7L231.8 587.6M252.8 590.7L260.2 591.3M253.2 592.1L259.8 590.0M281.5 593.1L289.0 593.8M282.0 594.5L288.4 592.3M310.8 595.6L318.5 596.2M311.6 597.0L317.7 594.8M340.8 598.1L348.8 598.8M341.8 599.6L347.7 597.3M371.6 600.7L379.7 601.4M372.8 602.2L378.5 599.8M989.6 652.5L1002.1 653.6M996.6 654.9L995.2 651.2M1038.3 656.6L1051.2 657.7M1045.8 659.0L1043.6 655.3M1088.4 660.8L1101.7 661.9M1096.5 663.3L1093.6 659.4M1140.1 665.1L1153.8 666.3M1148.8 667.7L1145.2 663.7M7.7 561.3L13.4 561.7M6.6 562.3L14.5 560.7M29.8 563.0L35.6 563.5M28.8 564.1L36.5 562.4M52.3 564.8L58.2 565.3M51.4 565.9L59.0 564.2M75.2 566.6L81.3 567.1M74.5 567.7L82.0 566.1M98.7 568.5L104.9 569.0M98.1 569.6L105.4 567.9M122.6 570.4L128.9 570.9M122.2 571.6L129.3 569.8M147.1 572.4L153.5 572.9M146.7 573.5L153.8 571.7M172.0 574.4L178.6 574.9M171.8 575.5L178.7 573.7M197.5 576.4L204.2 576.9M197.5 577.6L204.2 575.7M223.5 578.5L230.4 579.0M223.7 579.7L230.2 577.8M250.2 580.6L257.2 581.2M250.5 581.9L256.8 579.9M277.4 582.8L284.5 583.4M277.9 584.1L284.0 582.1M305.2 585.0L312.5 585.6M305.9 586.3L311.8 584.3M333.6 587.3L341.1 587.9M334.5 588.6L340.2 586.5M362.8 589.6L370.4 590.2M363.9 591.0L369.3 588.8M984.7 639.3L996.6 640.2M991.3 641.4L990.0 638.1M1030.8 642.9L1043.0 643.9M1037.9 645.1L1035.9 641.7M1078.3 646.7L1090.9 647.7M1085.9 649.0L1083.3 645.5M1127.2 650.6L1140.1 651.7M1135.3 653.0L1132.0 649.4M-5.0 552.2L0.4 552.6M-6.1 553.1L1.5 551.7M15.8 553.8L21.3 554.2M14.8 554.7L22.3 553.3M37.0 555.4L42.6 555.8M36.1 556.4L43.5 554.9M58.6 557.0L64.3 557.5M57.8 558.0L65.1 556.5M80.6 558.7L86.4 559.2M80.0 559.7L87.1 558.2M103.1 560.4L109.0 560.9M102.6 561.4L109.5 559.9M126.0 562.2L132.1 562.6M125.6 563.2L132.4 561.6M149.4 564.0L155.5 564.4M149.1 565.0L155.8 563.4M173.2 565.8L179.5 566.3M173.1 566.8L179.6 565.2M197.6 567.6L204.0 568.1M197.6 568.7L204.0 567.0M222.4 569.5L229.0 570.0M222.6 570.6L228.8 568.9M247.8 571.5L254.5 572.0M248.1 572.6L254.1 570.8M273.7 573.4L280.5 573.9M274.1 574.6L280.0 572.8M300.1 575.4L307.1 576.0M300.8 576.6L306.4 574.8M327.1 577.5L334.3 578.0M327.9 578.7L333.4 576.8M354.8 579.6L362.0 580.2M355.7 580.8L361.0 578.9M980.2 627.2L991.5 628.1M986.4 629.2L985.3 626.2M1024.1 630.6L1035.7 631.5M1030.7 632.6L1029.0 629.5M1069.1 634.0L1081.1 634.9M1076.3 636.1L1073.9 632.9M1115.5 637.6L1127.8 638.5M1123.1 639.6L1120.1 636.4M3.2 545.5L8.4 545.8M2.2 546.3L9.4 545.0M23.3 546.9L28.5 547.3M22.3 547.8L29.4 546.4M43.7 548.4L49.0 548.8M42.8 549.3L49.8 547.9M64.4 549.9L69.9 550.3M63.7 550.8L70.6 549.4M85.6 551.5L91.2 551.9M85.0 552.4L91.7 551.0M107.2 553.0L112.8 553.4M106.6 554.0L113.3 552.5M129.1 554.6L134.9 555.1M128.7 555.6L135.3 554.1M151.5 556.3L157.4 556.7M151.3 557.2L157.7 555.7M174.4 557.9L180.4 558.4M174.2 558.9L180.5 557.4M197.6 559.6L203.8 560.1M197.6 560.6L203.7 559.1M221.4 561.4L227.6 561.8M221.5 562.4L227.5 560.8M245.6 563.1L252.0 563.6M245.9 564.2L251.7 562.5M270.3 564.9L276.8 565.4M270.7 566.0L276.3 564.3M295.5 566.7L302.1 567.2M296.1 567.8L301.5 566.2M321.2 568.6L328.0 569.1M322.0 569.7L327.2 568.0M347.5 570.5L354.4 571.0M348.4 571.7L353.5 569.9M374.3 572.5L381.4 573.0M375.4 573.6L380.3 571.9M976.1 616.3L986.9 617.1M982.1 618.1L981.0 615.4M1017.9 619.4L1029.0 620.2M1024.3 621.2L1022.7 618.4M1060.9 622.5L1072.2 623.3M1067.6 624.3L1065.5 621.5M1104.9 625.7L1116.6 626.5M1112.1 627.6L1109.4 624.7M1150.2 629.0L1162.2 629.9M1157.8 631.0L1154.5 627.9M30.1 540.6L35.2 540.9M29.3 541.4L36.0 540.2M49.8 542.0L54.9 542.3M49.0 542.8L55.7 541.5M69.8 543.4L75.0 543.7M69.1 544.2L75.7 542.9M90.1 544.8L95.5 545.2M89.6 545.6L96.0 544.3M110.9 546.2L116.3 546.6M110.4 547.1L116.8 545.8M132.0 547.7L137.5 548.1M131.6 548.6L137.9 547.2M153.5 549.2L159.1 549.6M153.2 550.1L159.4 548.7M175.4 550.7L181.1 551.1M175.3 551.6L181.2 550.2M197.7 552.3L203.6 552.7M197.7 553.2L203.5 551.8M220.4 553.9L226.4 554.3M220.6 554.8L226.3 553.4M243.6 555.5L249.7 555.9M243.9 556.4L249.4 555.0M267.2 557.1L273.4 557.6M267.6 558.1L273.0 556.6M291.3 558.8L297.6 559.3M291.8 559.8L297.1 558.3M315.9 560.5L322.3 561.0M316.5 561.5L321.6 560.0M340.9 562.3L347.5 562.7M341.7 563.3L346.6 561.7M366.4 564.1L373.2 564.5M367.4 565.1L372.1 563.5M972.4 606.3L982.7 607.1M978.1 607.9L977.1 605.5M1012.4 609.1L1022.9 609.9M1018.3 610.8L1016.9 608.2M1053.3 612.0L1064.1 612.7M1059.7 613.7L1057.7 611.1M1095.3 614.9L1106.4 615.7M1102.1 616.6L1099.6 614.0M1138.4 617.9L1149.8 618.7M1145.6 619.7L1142.6 616.9M114.3 540.0L119.6 540.3M113.9 540.7L120.0 539.5M134.6 541.3L140.0 541.7M134.3 542.1L140.3 540.9M155.3 542.7L160.7 543.1M155.1 543.5L160.9 542.3M176.3 544.1L181.9 544.5M176.2 544.9L182.0 543.7M197.8 545.5L203.4 545.9M197.7 546.4L203.4 545.1M219.6 547.0L225.3 547.4M219.7 547.9L225.2 546.5M241.8 548.5L247.6 548.9M242.0 549.4L247.4 548.0M264.4 550.0L270.3 550.4M264.7 550.9L270.0 549.5M287.4 551.5L293.5 552.0M287.9 552.5L293.0 551.0M310.9 553.1L317.1 553.5M311.5 554.0L316.5 552.6M334.8 554.7L341.1 555.1M335.6 555.7L340.4 554.2M359.2 556.4L365.7 556.8M360.1 557.3L364.7 555.8M969.0 597.2L978.9 597.8M974.4 598.7L973.5 596.4M1007.2 599.7L1017.3 600.4M1012.9 601.3L1011.6 598.9M1046.4 602.4L1056.7 603.1M1052.4 603.9L1050.6 601.5M1086.5 605.0L1097.1 605.8M1092.9 606.6L1090.6 604.2M1127.6 607.8L1138.5 608.5M1134.4 609.4L1131.6 606.9M218.8 540.7L224.3 541.0M218.9 541.5L224.1 540.2M240.1 542.0L245.7 542.4M240.3 542.9L245.5 541.6M261.8 543.4L267.5 543.8M262.1 544.3L267.2 543.0M283.9 544.9L289.7 545.2M284.3 545.7L289.2 544.4M306.4 546.3L312.3 546.7M307.0 547.2L311.7 545.8M329.3 547.8L335.3 548.2M330.0 548.7L334.6 547.3M352.6 549.3L358.8 549.7M353.5 550.2L357.9 548.8M376.4 550.8L382.6 551.2M377.4 551.7L381.7 550.3M965.9 588.8L975.3 589.4M971.0 590.1L970.2 588.0M1002.5 591.1L1012.2 591.7M1008.0 592.5L1006.7 590.3M1040.0 593.5L1049.9 594.2M1045.8 595.0L1044.1 592.7M1078.4 596.0L1088.5 596.6M1084.5 597.5L1082.4 595.2M1117.7 598.5L1128.1 599.2M1124.2 600.0L1121.6 597.7M302.2 540.0L307.9 540.4M302.7 540.8L307.3 539.6M324.2 541.4L330.0 541.7M324.8 542.2L329.3 541.0M346.5 542.8L352.4 543.1M347.3 543.6L351.6 542.3M369.3 544.2L375.3 544.6M370.2 545.0L374.4 543.7M963.0 581.0L972.1 581.5M967.9 582.2L967.1 580.3M998.2 583.2L1007.5 583.7M1003.4 584.4L1002.2 582.4M1034.2 585.4L1043.6 586.0M1039.7 586.7L1038.1 584.7M1071.0 587.7L1080.7 588.3M1076.8 589.0L1074.8 586.9M1108.6 590.0L1118.5 590.6M1114.7 591.4L1112.4 589.2M1147.1 592.4L1157.3 593.0M1153.6 593.8L1150.8 591.6M960.3 573.8L969.0 574.3M965.0 574.9L964.3 573.1M994.1 575.8L1003.1 576.3M999.1 577.0L998.1 575.1M1028.7 577.8L1037.9 578.4M1034.0 579.1L1032.6 577.2M1064.1 580.0L1073.4 580.5M1069.6 581.2L1067.8 579.3M1100.2 582.1L1109.7 582.7M1106.0 583.4L1103.9 581.4M1137.1 584.3L1146.9 584.9M1143.3 585.6L1140.7 583.6M957.8 567.1L966.2 567.5M962.3 568.1L961.7 566.5M990.4 568.9L999.0 569.4M995.2 570.1L994.2 568.3M1023.7 570.9L1032.5 571.4M1028.7 572.0L1027.4 570.2M1057.7 572.8L1066.7 573.3M1063.0 574.0L1061.4 572.2M1092.4 574.8L1101.6 575.3M1098.0 576.0L1096.0 574.2M1127.9 576.9L1137.2 577.4M1133.7 578.1L1131.4 576.2M955.5 560.8L963.6 561.3M959.8 561.8L959.2 560.3M986.9 562.6L995.2 563.0M991.5 563.6L990.6 562.0M1019.0 564.4L1027.5 564.8M1023.9 565.4L1022.6 563.8M1051.8 566.2L1060.4 566.7M1056.9 567.3L1055.3 565.6M1085.2 568.0L1094.0 568.5M1090.5 569.1L1088.7 567.4M1119.3 569.9L1128.3 570.4M1124.9 571.1L1122.7 569.3M1154.1 571.9L1163.3 572.4M1160.0 573.0L1157.5 571.3M953.3 555.0L961.2 555.4M957.5 555.9L956.9 554.5M983.7 556.6L991.7 557.1M988.1 557.6L987.3 556.1M1014.7 558.3L1022.8 558.7M1019.3 559.3L1018.2 557.8M1046.3 560.0L1054.6 560.5M1051.1 561.0L1049.7 559.5M1078.5 561.7L1087.0 562.2M1083.6 562.8L1081.8 561.2M1111.3 563.5L1120.0 564.0M1116.7 564.6L1114.6 562.9M1144.9 565.3L1153.7 565.8M1150.5 566.4L1148.1 564.7M951.3 549.5L958.9 549.9M955.3 550.4L954.8 549.1M980.7 551.1L988.4 551.5M984.9 552.0L984.1 550.6M1010.6 552.6L1018.5 553.0M1015.1 553.6L1014.0 552.1M1041.1 554.2L1049.1 554.6M1045.8 555.2L1044.4 553.7M1072.2 555.9L1080.4 556.3M1077.1 556.8L1075.5 555.3M1103.9 557.5L1112.2 557.9M1109.0 558.5L1107.1 557.0M1136.2 559.2L1144.7 559.6M1141.6 560.2L1139.3 558.6M949.4 544.4L956.7 544.8M953.3 545.3L952.8 544.0M977.8 545.9L985.3 546.2M981.9 546.7L981.2 545.4M1006.8 547.3L1014.4 547.7M1011.1 548.2L1010.1 546.9M1036.3 548.8L1044.0 549.2M1040.8 549.7L1039.5 548.3M1066.3 550.3L1074.2 550.7M1071.0 551.2L1069.5 549.9M1096.9 551.9L1105.0 552.3M1101.8 552.8L1100.1 551.4M1128.1 553.5L1136.3 553.9M1133.3 554.4L1131.2 553.0M975.1 541.0L982.4 541.3M979.1 541.8L978.4 540.5M1003.2 542.4L1010.6 542.7M1007.4 543.2L1006.4 541.9M1031.8 543.8L1039.3 544.1M1036.1 544.6L1034.9 543.3M1060.8 545.2L1068.5 545.6M1065.3 546.0L1063.9 544.7M1090.4 546.6L1098.2 547.0M1095.1 547.5L1093.5 546.2M1120.5 548.1L1128.5 548.5M1125.5 549.0L1123.5 547.6M1151.2 549.6L1159.3 550.0M1156.4 550.5L1154.2 549.1M1055.6 540.3L1063.0 540.7M1060.0 541.1L1058.7 539.9M1084.3 541.7L1091.8 542.1M1088.8 542.5L1087.3 541.3M1113.4 543.1L1121.1 543.5M1118.2 543.9L1116.4 542.6M1143.1 544.5L1150.9 544.9M1148.1 545.3L1146.0 544.0" stroke-width="1.6"/>
 </g>
 <!-- blue panel -->
 <polygon points="356.4,210.5 987.4,140.7 952.4,832 370.6,742.7" fill="url(#panel)"/>
 <polygon points="356.4,210.5 987.4,140.7 952.4,832 370.6,742.7" fill="url(#panelTL)"/>
 <!-- ground peeking below panel bottom-left -->
 <polygon points="370.6,742.7 700,793 360,793 362,742" fill="#6569b9"/>
 <g clip-path="url(#gclip2)" fill="none" stroke="#d8dbf6" stroke-opacity="0.7" filter="url(#blur1)"><path d="M-5712.9 500L-14876.8 800.0M-5643.6 500L-14626.8 800.0M-5574.3 500L-14376.8 800.0M-5505.0 500L-14126.8 800.0M-5435.8 500L-13876.8 800.0M-5366.5 500L-13626.8 800.0M-5297.2 500L-13376.8 800.0M-5227.9 500L-13126.8 800.0M-5158.6 500L-12876.8 800.0M-5089.4 500L-12626.8 800.0M-5020.1 500L-12376.8 800.0M-4950.8 500L-12126.8 800.0M-4881.5 500L-11876.8 800.0M-4812.3 500L-11626.8 800.0M-4743.0 500L-11376.8 800.0M-4673.7 500L-11126.8 800.0M-4604.4 500L-10876.8 800.0M-4535.1 500L-10626.8 800.0M-4465.9 500L-10376.8 800.0M-4396.6 500L-10126.8 800.0M-4327.3 500L-9876.8 800.0M-4258.0 500L-9626.8 800.0M-4188.8 500L-9376.8 800.0M-4119.5 500L-9126.8 800.0M-4050.2 500L-8876.8 800.0M-3980.9 500L-8626.8 800.0M-3911.7 500L-8376.8 800.0M-3842.4 500L-8126.8 800.0M-3773.1 500L-7876.8 800.0M-3703.8 500L-7626.8 800.0M-3634.5 500L-7376.8 800.0M-3565.3 500L-7126.8 800.0M-3496.0 500L-6876.8 800.0M-3426.7 500L-6626.8 800.0M-3357.4 500L-6376.8 800.0M-3288.2 500L-6126.8 800.0M-3218.9 500L-5876.8 800.0M-3149.6 500L-5626.8 800.0M-3080.3 500L-5376.8 800.0M-3011.1 500L-5126.8 800.0M-2941.8 500L-4876.8 800.0M-2872.5 500L-4626.8 800.0M-2803.2 500L-4376.8 800.0M-2733.9 500L-4126.8 800.0M-2664.7 500L-3876.8 800.0M-2595.4 500L-3626.8 800.0M-2526.1 500L-3376.8 800.0M-2456.8 500L-3126.8 800.0M-2387.6 500L-2876.8 800.0M-2318.3 500L-2626.8 800.0M-2249.0 500L-2376.8 800.0M-2179.7 500L-2126.8 800.0M-2110.5 500L-1876.8 800.0M-2041.2 500L-1626.8 800.0M-1971.9 500L-1376.8 800.0M-1902.6 500L-1126.8 800.0M-1833.3 500L-876.8 800.0M-1764.1 500L-626.8 800.0M-1694.8 500L-376.8 800.0M-1625.5 500L-126.8 800.0M-1556.2 500L123.2 800.0M-1487.0 500L373.2 800.0M-1417.7 500L623.2 800.0M-1348.4 500L873.2 800.0M-1279.1 500L1123.2 800.0M-1209.8 500L1373.2 800.0M-1140.6 500L1623.2 800.0M-1071.3 500L1873.2 800.0M-1002.0 500L2123.2 800.0M-932.7 500L2373.2 800.0M-863.5 500L2623.2 800.0M-794.2 500L2873.2 800.0M-724.9 500L3123.2 800.0M-655.6 500L3373.2 800.0M-586.4 500L3623.2 800.0M-517.1 500L3873.2 800.0M-447.8 500L4123.2 800.0M-378.5 500L4373.2 800.0M-309.2 500L4623.2 800.0M-240.0 500L4873.2 800.0M-170.7 500L5123.2 800.0M-101.4 500L5373.2 800.0M-32.1 500L5623.2 800.0M37.1 500L5873.2 800.0M106.4 500L6123.2 800.0M175.7 500L6373.2 800.0M245.0 500L6623.2 800.0M314.2 500L6873.2 800.0M383.5 500L7123.2 800.0M452.8 500L7373.2 800.0M522.1 500L7623.2 800.0M591.4 500L7873.2 800.0M660.6 500L8123.2 800.0M729.9 500L8373.2 800.0M799.2 500L8623.2 800.0M868.5 500L8873.2 800.0M937.7 500L9123.2 800.0M1007.0 500L9373.2 800.0M1076.3 500L9623.2 800.0M1145.6 500L9873.2 800.0M1214.9 500L10123.2 800.0M1284.1 500L10373.2 800.0M1353.4 500L10623.2 800.0M1422.7 500L10873.2 800.0M1492.0 500L11123.2 800.0M1561.2 500L11373.2 800.0M1630.5 500L11623.2 800.0M1699.8 500L11873.2 800.0M1769.1 500L12123.2 800.0M1838.3 500L12373.2 800.0M1907.6 500L12623.2 800.0M1976.9 500L12873.2 800.0M2046.2 500L13123.2 800.0M2115.5 500L13373.2 800.0M2184.7 500L13623.2 800.0M2254.0 500L13873.2 800.0M2323.3 500L14123.2 800.0M2392.6 500L14373.2 800.0M2461.8 500L14623.2 800.0M2531.1 500L14873.2 800.0" stroke-width="1.9"/><path d="M-950.0 500L-5750.1 800.0M-930.1 500L-5678.1 800.0M-910.1 500L-5606.1 800.0M-890.2 500L-5534.1 800.0M-870.2 500L-5462.1 800.0M-850.3 500L-5390.1 800.0M-830.3 500L-5318.1 800.0M-810.4 500L-5246.1 800.0M-790.4 500L-5174.1 800.0M-770.5 500L-5102.1 800.0M-750.5 500L-5030.1 800.0M-730.6 500L-4958.1 800.0M-710.6 500L-4886.1 800.0M-690.7 500L-4814.1 800.0M-670.7 500L-4742.1 800.0M-650.7 500L-4670.1 800.0M-630.8 500L-4598.1 800.0M-610.8 500L-4526.1 800.0M-590.9 500L-4454.1 800.0M-570.9 500L-4382.1 800.0M-551.0 500L-4310.1 800.0M-531.0 500L-4238.1 800.0M-511.1 500L-4166.1 800.0M-491.1 500L-4094.1 800.0M-471.2 500L-4022.1 800.0M-451.2 500L-3950.1 800.0M-431.3 500L-3878.1 800.0M-411.3 500L-3806.1 800.0M-391.4 500L-3734.1 800.0M-371.4 500L-3662.1 800.0M-351.5 500L-3590.1 800.0M-331.5 500L-3518.1 800.0M-311.6 500L-3446.1 800.0M-291.6 500L-3374.1 800.0M-271.7 500L-3302.1 800.0M-251.7 500L-3230.1 800.0M-231.8 500L-3158.1 800.0M-211.8 500L-3086.1 800.0M-191.9 500L-3014.1 800.0M-171.9 500L-2942.1 800.0M-152.0 500L-2870.1 800.0M-132.0 500L-2798.1 800.0M-112.0 500L-2726.1 800.0M-92.1 500L-2654.1 800.0M-72.1 500L-2582.1 800.0M-52.2 500L-2510.1 800.0M-32.2 500L-2438.1 800.0M-12.3 500L-2366.1 800.0M7.7 500L-2294.1 800.0M27.6 500L-2222.1 800.0M47.6 500L-2150.1 800.0M67.5 500L-2078.1 800.0M87.5 500L-2006.1 800.0M107.4 500L-1934.1 800.0M127.4 500L-1862.1 800.0M147.3 500L-1790.1 800.0M167.3 500L-1718.1 800.0M187.2 500L-1646.1 800.0M207.2 500L-1574.1 800.0M227.1 500L-1502.1 800.0M247.1 500L-1430.1 800.0M267.0 500L-1358.1 800.0M287.0 500L-1286.1 800.0M306.9 500L-1214.1 800.0M326.9 500L-1142.1 800.0M346.8 500L-1070.1 800.0M366.8 500L-998.1 800.0M386.7 500L-926.1 800.0M406.7 500L-854.1 800.0M426.7 500L-782.1 800.0M446.6 500L-710.1 800.0M466.6 500L-638.1 800.0M486.5 500L-566.1 800.0M506.5 500L-494.1 800.0M526.4 500L-422.1 800.0M546.4 500L-350.1 800.0M566.3 500L-278.1 800.0M586.3 500L-206.1 800.0M606.2 500L-134.1 800.0M626.2 500L-62.1 800.0M646.1 500L9.9 800.0M666.1 500L81.9 800.0M686.0 500L153.9 800.0M706.0 500L225.9 800.0M725.9 500L297.9 800.0M745.9 500L369.9 800.0M765.8 500L441.9 800.0M785.8 500L513.9 800.0M805.7 500L585.9 800.0M825.7 500L657.9 800.0M845.6 500L729.9 800.0M865.6 500L801.9 800.0M885.5 500L873.9 800.0M905.5 500L945.9 800.0M925.4 500L1017.9 800.0M945.4 500L1089.9 800.0M965.3 500L1161.9 800.0M985.3 500L1233.9 800.0M1005.3 500L1305.9 800.0M1025.2 500L1377.9 800.0M1045.2 500L1449.9 800.0M1065.1 500L1521.9 800.0M1085.1 500L1593.9 800.0M1105.0 500L1665.9 800.0M1125.0 500L1737.9 800.0M1144.9 500L1809.9 800.0M1164.9 500L1881.9 800.0M1184.8 500L1953.9 800.0M1204.8 500L2025.9 800.0M1224.7 500L2097.9 800.0M1244.7 500L2169.9 800.0M1264.6 500L2241.9 800.0M1284.6 500L2313.9 800.0M1304.5 500L2385.9 800.0M1324.5 500L2457.9 800.0M1344.4 500L2529.9 800.0M1364.4 500L2601.9 800.0M1384.3 500L2673.9 800.0M1404.3 500L2745.9 800.0M1424.2 500L2817.9 800.0M1444.2 500L2889.9 800.0M1464.1 500L2961.9 800.0M1484.1 500L3033.9 800.0M1504.0 500L3105.9 800.0M1524.0 500L3177.9 800.0M1544.0 500L3249.9 800.0M1563.9 500L3321.9 800.0M1583.9 500L3393.9 800.0M1603.8 500L3465.9 800.0M1623.8 500L3537.9 800.0M1643.7 500L3609.9 800.0M1663.7 500L3681.9 800.0M1683.6 500L3753.9 800.0M1703.6 500L3825.9 800.0M1723.5 500L3897.9 800.0M1743.5 500L3969.9 800.0M1763.4 500L4041.9 800.0M1783.4 500L4113.9 800.0M1803.3 500L4185.9 800.0M1823.3 500L4257.9 800.0M1843.2 500L4329.9 800.0M1863.2 500L4401.9 800.0M1883.1 500L4473.9 800.0M1903.1 500L4545.9 800.0M1923.0 500L4617.9 800.0M1943.0 500L4689.9 800.0M1962.9 500L4761.9 800.0M1982.9 500L4833.9 800.0M2002.8 500L4905.9 800.0M2022.8 500L4977.9 800.0M2042.7 500L5049.9 800.0M2062.7 500L5121.9 800.0M2082.7 500L5193.9 800.0M2102.6 500L5265.9 800.0M2122.6 500L5337.9 800.0M2142.5 500L5409.9 800.0M2162.5 500L5481.9 800.0M2182.4 500L5553.9 800.0M2202.4 500L5625.9 800.0M2222.3 500L5697.9 800.0M2242.3 500L5769.9 800.0M2262.2 500L5841.9 800.0M2282.2 500L5913.9 800.0M2302.1 500L5985.9 800.0M2322.1 500L6057.9 800.0M2342.0 500L6129.9 800.0M2362.0 500L6201.9 800.0M2381.9 500L6273.9 800.0M2401.9 500L6345.9 800.0M2421.8 500L6417.9 800.0M2441.8 500L6489.9 800.0M2461.7 500L6561.9 800.0M2481.7 500L6633.9 800.0M2501.6 500L6705.9 800.0M2521.6 500L6777.9 800.0M2541.5 500L6849.9 800.0M2561.5 500L6921.9 800.0M2581.4 500L6993.9 800.0M2601.4 500L7065.9 800.0M2621.3 500L7137.9 800.0" stroke-width="1.9"/><path d="M-4.5 757.2L7.5 759.2M-7.0 761.7L9.8 754.7M42.4 765.1L54.9 767.2M40.4 769.9L56.6 762.5M91.3 773.4L104.3 775.6M89.9 778.4L105.5 770.7M142.3 782.1L156.0 784.4M141.6 787.3L156.5 779.2M195.7 791.1L210.0 793.5M195.7 796.6L209.9 788.2M12.9 725.4L23.9 727.1M10.8 729.2L25.9 723.3M56.0 732.0L67.5 733.8M54.4 736.0L69.0 729.8M100.8 738.9L112.8 740.7M99.7 743.0L113.8 736.6M147.5 746.1L159.9 748.0M146.9 750.4L160.4 743.7M196.1 753.5L209.0 755.5M196.0 758.0L208.9 751.1M246.7 761.3L260.2 763.4M247.3 766.0L259.4 758.8M299.5 769.4L313.6 771.6M300.8 774.3L312.2 766.8M354.6 777.9L369.4 780.2M356.7 783.0L367.2 775.2M412.3 786.8L427.7 789.2M415.1 792.1L424.7 783.9M-11.0 693.1L-1.1 694.5M-13.1 696.3L0.9 691.4M27.6 698.6L37.8 700.0M25.8 701.8L39.4 696.8M67.5 704.2L78.1 705.7M66.1 707.5L79.3 702.4M108.8 710.0L119.9 711.6M107.9 713.5L120.7 708.1M151.8 716.0L163.2 717.7M151.2 719.7L163.6 714.1M196.3 722.3L208.2 724.0M196.3 726.1L208.1 720.3M242.6 728.8L254.9 730.6M243.1 732.7L254.3 726.7M290.6 735.6L303.5 737.4M291.7 739.7L302.3 733.4M340.7 742.6L354.0 744.5M342.3 746.9L352.2 740.3M392.7 750.0L406.6 751.9M395.1 754.4L404.2 747.6M447.0 757.6L461.4 759.6M450.0 762.2L458.3 755.1M503.5 765.6L518.6 767.7M507.4 770.4L514.7 763.0M562.6 773.9L578.3 776.1M567.2 778.9L573.5 771.2M624.2 782.6L640.7 784.9M629.8 787.8L635.0 779.7M688.7 791.6L705.9 794.1M695.3 797.1L699.3 788.7M4.1 671.0L13.3 672.2M2.3 673.7L15.1 669.5M40.1 675.7L49.6 676.9M38.5 678.5L51.0 674.2M77.2 680.5L87.1 681.8M76.1 683.4L88.2 678.9M115.7 685.5L125.9 686.8M114.8 688.5L126.6 683.9M155.4 690.6L166.0 692.0M155.0 693.7L166.3 689.0M196.5 696.0L207.5 697.4M196.5 699.2L207.4 694.2M239.1 701.5L250.4 703.0M239.5 704.8L249.9 699.7M283.2 707.2L295.0 708.8M284.1 710.7L294.0 705.4M329.0 713.2L341.2 714.7M330.4 716.7L339.7 711.2M530.2 739.3L544.4 741.1M534.1 743.4L540.4 737.0M585.6 746.5L600.4 748.4M590.2 750.8L595.7 744.1M643.3 754.0L658.7 756.0M648.8 758.5L653.2 751.5M703.5 761.8L719.5 763.8M709.8 766.5L713.2 759.2M766.2 769.9L783.0 772.1M773.4 774.8L775.7 767.3M831.8 778.4L849.3 780.7M840.0 783.5L841.0 775.6M900.2 787.3L918.5 789.7M909.6 792.6L909.2 784.4M17.2 651.8L25.8 652.9M15.6 654.2L27.3 650.6M50.9 655.9L59.8 657.0M49.6 658.3L61.0 654.6M85.7 660.1L94.9 661.2M84.6 662.6L95.8 658.7M121.5 664.4L131.0 665.5M120.8 667.0L131.6 663.0M158.5 668.9L168.3 670.0M158.1 671.5L168.6 667.4M196.7 673.5L206.8 674.7M196.7 676.2L206.8 672.0M236.2 678.2L246.6 679.5M236.5 681.0L246.2 676.7M276.9 683.1L287.8 684.4M277.7 686.0L286.9 681.5M319.1 688.2L330.3 689.5M320.3 691.2L329.0 686.5M362.7 693.4L374.3 694.8M364.4 696.6L372.6 691.7M774.9 743.0L790.5 744.9M781.7 747.3L783.6 740.7M835.9 750.4L852.2 752.3M843.6 754.8L844.4 748.0M899.5 758.0L916.5 760.1M908.1 762.6L907.8 755.5M965.8 766.0L983.5 768.1M975.4 770.8L973.8 763.4M1035.0 774.3L1053.5 776.6M1045.8 779.4L1042.7 771.6M1107.3 783.0L1126.6 785.4M1119.3 788.3L1114.7 780.2M-2.3 631.6L5.7 632.5M-3.9 633.6L7.2 630.5M28.6 635.1L36.8 636.0M27.2 637.1L38.1 634.0M60.3 638.6L68.7 639.6M59.2 640.8L69.8 637.5M93.0 642.3L101.6 643.3M92.1 644.5L102.4 641.1M126.6 646.1L135.5 647.1M126.0 648.3L136.0 644.9M161.2 650.0L170.4 651.0M160.9 652.3L170.6 648.7M196.9 654.0L206.3 655.0M196.8 656.4L206.3 652.7M233.6 658.1L243.4 659.2M233.9 660.6L243.0 656.8M271.5 662.3L281.6 663.5M272.2 664.9L280.8 661.0M310.6 666.7L321.0 667.9M311.6 669.4L319.9 665.3M351.0 671.3L361.7 672.5M352.4 674.0L360.2 669.8M960.6 739.7L977.0 741.5M969.5 743.8L968.1 737.4M1024.8 746.9L1041.9 748.8M1034.6 751.2L1032.0 744.5M1091.7 754.4L1109.5 756.4M1102.5 758.9L1098.6 751.9M9.5 617.2L17.0 618.0M8.0 619.0L18.4 616.3M38.7 620.3L46.4 621.1M37.4 622.1L47.5 619.3M68.6 623.5L76.6 624.3M67.6 625.3L77.5 622.4M99.4 626.7L107.6 627.6M98.6 628.6L108.3 625.6M131.1 630.0L139.4 630.9M130.5 632.0L139.9 628.9M163.6 633.4L172.2 634.3M163.3 635.5L172.4 632.3M197.0 637.0L205.9 637.9M197.0 639.0L205.8 635.8M231.4 640.6L240.5 641.5M231.7 642.7L240.2 639.4M266.8 644.3L276.2 645.3M267.4 646.5L275.5 643.1M303.2 648.1L312.9 649.1M304.1 650.4L311.9 646.9M340.8 652.1L350.7 653.1M342.0 654.4L349.4 650.8M956.0 716.7L971.3 718.3M964.3 720.4L963.0 714.8M1015.9 723.0L1031.8 724.7M1025.0 726.8L1022.7 721.0M1078.1 729.6L1094.7 731.3M1088.1 733.5L1084.7 727.4M1142.8 736.4L1160.0 738.2M1153.7 740.4L1149.1 734.2M-7.1 601.8L-0.1 602.5M-8.6 603.3L1.3 600.9M19.9 604.4L27.0 605.2M18.6 606.0L28.3 603.6M47.6 607.2L54.9 607.9M46.5 608.8L56.0 606.3M76.0 610.0L83.5 610.7M75.1 611.7L84.3 609.1M105.1 612.9L112.8 613.6M104.4 614.6L113.5 611.9M135.0 615.8L142.9 616.6M134.5 617.6L143.3 614.9M165.7 618.9L173.8 619.7M165.4 620.7L173.9 617.9M197.1 622.0L205.4 622.8M197.1 623.8L205.4 621.0M229.5 625.2L238.0 626.0M229.7 627.1L237.7 624.1M262.7 628.4L271.4 629.3M263.2 630.4L270.9 627.4M296.8 631.8L305.8 632.7M297.6 633.8L305.0 630.7M331.9 635.3L341.2 636.2M333.0 637.3L340.0 634.2M368.0 638.9L377.5 639.8M369.4 641.0L376.0 637.7M952.0 696.6L966.4 698.0M959.7 699.8L958.6 694.8M1008.1 702.1L1023.0 703.6M1016.6 705.4L1014.5 700.3M1066.3 707.9L1081.7 709.4M1075.5 711.3L1072.5 706.0M1126.6 713.8L1142.6 715.4M1136.6 717.4L1132.5 711.9M3.5 590.6L10.2 591.2M2.2 592.0L11.4 589.8M29.3 593.0L36.1 593.6M28.1 594.4L37.2 592.2M55.6 595.4L62.6 596.1M54.6 596.9L63.5 594.6M82.6 598.0L89.7 598.6M81.8 599.4L90.5 597.1M110.2 600.5L117.5 601.2M109.6 602.1L118.1 599.7M138.5 603.2L146.0 603.9M138.1 604.7L146.4 602.3M167.5 605.9L175.2 606.6M167.3 607.5L175.3 605.0M197.2 608.7L205.1 609.4M197.2 610.3L205.0 607.8M227.7 611.5L235.8 612.3M227.9 613.2L235.5 610.6M259.0 614.4L267.3 615.2M259.4 616.1L266.7 613.5M291.1 617.4L299.6 618.2M291.8 619.2L298.8 616.4M324.0 620.5L332.7 621.3M325.0 622.3L331.7 619.5M357.8 623.6L366.8 624.5M359.1 625.5L365.5 622.6M948.4 678.7L962.0 680.0M955.7 681.6L954.7 677.2M1001.2 683.7L1015.2 685.0M1009.1 686.6L1007.3 682.1M1055.8 688.8L1070.3 690.1M1064.4 691.8L1061.7 687.1M1112.3 694.0L1127.3 695.4M1121.6 697.2L1118.0 692.3M-10.9 578.4L-4.7 578.9M-12.2 579.6L-3.4 577.7M13.1 580.5L19.5 581.1M11.9 581.7L20.6 579.8M37.7 582.7L44.2 583.2M36.7 583.9L45.2 582.0M62.8 584.9L69.4 585.5M61.9 586.2L70.3 584.2M88.5 587.1L95.3 587.7M87.8 588.5L96.0 586.4M114.8 589.5L121.7 590.1M114.2 590.8L122.2 588.7M141.7 591.8L148.7 592.5M141.3 593.3L149.1 591.1M169.2 594.3L176.4 594.9M169.0 595.7L176.6 593.5M197.3 596.8L204.8 597.4M197.3 598.2L204.7 596.0M226.2 599.3L233.8 600.0M226.4 600.8L233.6 598.5M255.7 601.9L263.5 602.6M256.1 603.5L263.1 601.1M286.0 604.6L294.0 605.3M286.6 606.2L293.3 603.7M317.0 607.3L325.2 608.1M317.9 609.0L324.3 606.4M348.9 610.1L357.3 610.9M350.0 611.8L356.1 609.2M945.3 662.8L958.1 664.0M952.1 665.4L951.2 661.4M995.1 667.2L1008.3 668.4M1002.5 669.9L1000.9 665.8M1046.6 671.8L1060.2 673.0M1054.6 674.5L1052.2 670.3M1099.7 676.5L1113.8 677.7M1108.3 679.3L1105.1 674.9M-1.2 569.4L4.8 569.9M-2.4 570.5L5.9 568.8M21.8 571.3L27.9 571.9M20.8 572.5L28.9 570.7M45.3 573.3L51.5 573.8M44.4 574.5L52.4 572.7M69.3 575.3L75.6 575.9M68.5 576.5L76.4 574.7M93.8 577.4L100.3 577.9M93.2 578.6L100.9 576.7M118.9 579.5L125.5 580.0M118.4 580.7L126.0 578.8M144.5 581.6L151.2 582.2M144.1 582.9L151.5 580.9M170.7 583.8L177.6 584.4M170.5 585.1L177.7 583.1M197.4 586.1L204.5 586.7M197.4 587.4L204.4 585.3M224.8 588.4L232.0 589.0M225.0 589.7L231.8 587.6M252.8 590.7L260.2 591.3M253.2 592.1L259.8 590.0M281.5 593.1L289.0 593.8M282.0 594.5L288.4 592.3M310.8 595.6L318.5 596.2M311.6 597.0L317.7 594.8M340.8 598.1L348.8 598.8M341.8 599.6L347.7 597.3M371.6 600.7L379.7 601.4M372.8 602.2L378.5 599.8M989.6 652.5L1002.1 653.6M996.6 654.9L995.2 651.2M1038.3 656.6L1051.2 657.7M1045.8 659.0L1043.6 655.3M1088.4 660.8L1101.7 661.9M1096.5 663.3L1093.6 659.4M1140.1 665.1L1153.8 666.3M1148.8 667.7L1145.2 663.7M7.7 561.3L13.4 561.7M6.6 562.3L14.5 560.7M29.8 563.0L35.6 563.5M28.8 564.1L36.5 562.4M52.3 564.8L58.2 565.3M51.4 565.9L59.0 564.2M75.2 566.6L81.3 567.1M74.5 567.7L82.0 566.1M98.7 568.5L104.9 569.0M98.1 569.6L105.4 567.9M122.6 570.4L128.9 570.9M122.2 571.6L129.3 569.8M147.1 572.4L153.5 572.9M146.7 573.5L153.8 571.7M172.0 574.4L178.6 574.9M171.8 575.5L178.7 573.7M197.5 576.4L204.2 576.9M197.5 577.6L204.2 575.7M223.5 578.5L230.4 579.0M223.7 579.7L230.2 577.8M250.2 580.6L257.2 581.2M250.5 581.9L256.8 579.9M277.4 582.8L284.5 583.4M277.9 584.1L284.0 582.1M305.2 585.0L312.5 585.6M305.9 586.3L311.8 584.3M333.6 587.3L341.1 587.9M334.5 588.6L340.2 586.5M362.8 589.6L370.4 590.2M363.9 591.0L369.3 588.8M984.7 639.3L996.6 640.2M991.3 641.4L990.0 638.1M1030.8 642.9L1043.0 643.9M1037.9 645.1L1035.9 641.7M1078.3 646.7L1090.9 647.7M1085.9 649.0L1083.3 645.5M1127.2 650.6L1140.1 651.7M1135.3 653.0L1132.0 649.4M-5.0 552.2L0.4 552.6M-6.1 553.1L1.5 551.7M15.8 553.8L21.3 554.2M14.8 554.7L22.3 553.3M37.0 555.4L42.6 555.8M36.1 556.4L43.5 554.9M58.6 557.0L64.3 557.5M57.8 558.0L65.1 556.5M80.6 558.7L86.4 559.2M80.0 559.7L87.1 558.2M103.1 560.4L109.0 560.9M102.6 561.4L109.5 559.9M126.0 562.2L132.1 562.6M125.6 563.2L132.4 561.6M149.4 564.0L155.5 564.4M149.1 565.0L155.8 563.4M173.2 565.8L179.5 566.3M173.1 566.8L179.6 565.2M197.6 567.6L204.0 568.1M197.6 568.7L204.0 567.0M222.4 569.5L229.0 570.0M222.6 570.6L228.8 568.9M247.8 571.5L254.5 572.0M248.1 572.6L254.1 570.8M273.7 573.4L280.5 573.9M274.1 574.6L280.0 572.8M300.1 575.4L307.1 576.0M300.8 576.6L306.4 574.8M327.1 577.5L334.3 578.0M327.9 578.7L333.4 576.8M354.8 579.6L362.0 580.2M355.7 580.8L361.0 578.9M980.2 627.2L991.5 628.1M986.4 629.2L985.3 626.2M1024.1 630.6L1035.7 631.5M1030.7 632.6L1029.0 629.5M1069.1 634.0L1081.1 634.9M1076.3 636.1L1073.9 632.9M1115.5 637.6L1127.8 638.5M1123.1 639.6L1120.1 636.4M3.2 545.5L8.4 545.8M2.2 546.3L9.4 545.0M23.3 546.9L28.5 547.3M22.3 547.8L29.4 546.4M43.7 548.4L49.0 548.8M42.8 549.3L49.8 547.9M64.4 549.9L69.9 550.3M63.7 550.8L70.6 549.4M85.6 551.5L91.2 551.9M85.0 552.4L91.7 551.0M107.2 553.0L112.8 553.4M106.6 554.0L113.3 552.5M129.1 554.6L134.9 555.1M128.7 555.6L135.3 554.1M151.5 556.3L157.4 556.7M151.3 557.2L157.7 555.7M174.4 557.9L180.4 558.4M174.2 558.9L180.5 557.4M197.6 559.6L203.8 560.1M197.6 560.6L203.7 559.1M221.4 561.4L227.6 561.8M221.5 562.4L227.5 560.8M245.6 563.1L252.0 563.6M245.9 564.2L251.7 562.5M270.3 564.9L276.8 565.4M270.7 566.0L276.3 564.3M295.5 566.7L302.1 567.2M296.1 567.8L301.5 566.2M321.2 568.6L328.0 569.1M322.0 569.7L327.2 568.0M347.5 570.5L354.4 571.0M348.4 571.7L353.5 569.9M374.3 572.5L381.4 573.0M375.4 573.6L380.3 571.9M976.1 616.3L986.9 617.1M982.1 618.1L981.0 615.4M1017.9 619.4L1029.0 620.2M1024.3 621.2L1022.7 618.4M1060.9 622.5L1072.2 623.3M1067.6 624.3L1065.5 621.5M1104.9 625.7L1116.6 626.5M1112.1 627.6L1109.4 624.7M1150.2 629.0L1162.2 629.9M1157.8 631.0L1154.5 627.9M30.1 540.6L35.2 540.9M29.3 541.4L36.0 540.2M49.8 542.0L54.9 542.3M49.0 542.8L55.7 541.5M69.8 543.4L75.0 543.7M69.1 544.2L75.7 542.9M90.1 544.8L95.5 545.2M89.6 545.6L96.0 544.3M110.9 546.2L116.3 546.6M110.4 547.1L116.8 545.8M132.0 547.7L137.5 548.1M131.6 548.6L137.9 547.2M153.5 549.2L159.1 549.6M153.2 550.1L159.4 548.7M175.4 550.7L181.1 551.1M175.3 551.6L181.2 550.2M197.7 552.3L203.6 552.7M197.7 553.2L203.5 551.8M220.4 553.9L226.4 554.3M220.6 554.8L226.3 553.4M243.6 555.5L249.7 555.9M243.9 556.4L249.4 555.0M267.2 557.1L273.4 557.6M267.6 558.1L273.0 556.6M291.3 558.8L297.6 559.3M291.8 559.8L297.1 558.3M315.9 560.5L322.3 561.0M316.5 561.5L321.6 560.0M340.9 562.3L347.5 562.7M341.7 563.3L346.6 561.7M366.4 564.1L373.2 564.5M367.4 565.1L372.1 563.5M972.4 606.3L982.7 607.1M978.1 607.9L977.1 605.5M1012.4 609.1L1022.9 609.9M1018.3 610.8L1016.9 608.2M1053.3 612.0L1064.1 612.7M1059.7 613.7L1057.7 611.1M1095.3 614.9L1106.4 615.7M1102.1 616.6L1099.6 614.0M1138.4 617.9L1149.8 618.7M1145.6 619.7L1142.6 616.9M114.3 540.0L119.6 540.3M113.9 540.7L120.0 539.5M134.6 541.3L140.0 541.7M134.3 542.1L140.3 540.9M155.3 542.7L160.7 543.1M155.1 543.5L160.9 542.3M176.3 544.1L181.9 544.5M176.2 544.9L182.0 543.7M197.8 545.5L203.4 545.9M197.7 546.4L203.4 545.1M219.6 547.0L225.3 547.4M219.7 547.9L225.2 546.5M241.8 548.5L247.6 548.9M242.0 549.4L247.4 548.0M264.4 550.0L270.3 550.4M264.7 550.9L270.0 549.5M287.4 551.5L293.5 552.0M287.9 552.5L293.0 551.0M310.9 553.1L317.1 553.5M311.5 554.0L316.5 552.6M334.8 554.7L341.1 555.1M335.6 555.7L340.4 554.2M359.2 556.4L365.7 556.8M360.1 557.3L364.7 555.8M969.0 597.2L978.9 597.8M974.4 598.7L973.5 596.4M1007.2 599.7L1017.3 600.4M1012.9 601.3L1011.6 598.9M1046.4 602.4L1056.7 603.1M1052.4 603.9L1050.6 601.5M1086.5 605.0L1097.1 605.8M1092.9 606.6L1090.6 604.2M1127.6 607.8L1138.5 608.5M1134.4 609.4L1131.6 606.9M218.8 540.7L224.3 541.0M218.9 541.5L224.1 540.2M240.1 542.0L245.7 542.4M240.3 542.9L245.5 541.6M261.8 543.4L267.5 543.8M262.1 544.3L267.2 543.0M283.9 544.9L289.7 545.2M284.3 545.7L289.2 544.4M306.4 546.3L312.3 546.7M307.0 547.2L311.7 545.8M329.3 547.8L335.3 548.2M330.0 548.7L334.6 547.3M352.6 549.3L358.8 549.7M353.5 550.2L357.9 548.8M376.4 550.8L382.6 551.2M377.4 551.7L381.7 550.3M965.9 588.8L975.3 589.4M971.0 590.1L970.2 588.0M1002.5 591.1L1012.2 591.7M1008.0 592.5L1006.7 590.3M1040.0 593.5L1049.9 594.2M1045.8 595.0L1044.1 592.7M1078.4 596.0L1088.5 596.6M1084.5 597.5L1082.4 595.2M1117.7 598.5L1128.1 599.2M1124.2 600.0L1121.6 597.7M302.2 540.0L307.9 540.4M302.7 540.8L307.3 539.6M324.2 541.4L330.0 541.7M324.8 542.2L329.3 541.0M346.5 542.8L352.4 543.1M347.3 543.6L351.6 542.3M369.3 544.2L375.3 544.6M370.2 545.0L374.4 543.7M963.0 581.0L972.1 581.5M967.9 582.2L967.1 580.3M998.2 583.2L1007.5 583.7M1003.4 584.4L1002.2 582.4M1034.2 585.4L1043.6 586.0M1039.7 586.7L1038.1 584.7M1071.0 587.7L1080.7 588.3M1076.8 589.0L1074.8 586.9M1108.6 590.0L1118.5 590.6M1114.7 591.4L1112.4 589.2M1147.1 592.4L1157.3 593.0M1153.6 593.8L1150.8 591.6M960.3 573.8L969.0 574.3M965.0 574.9L964.3 573.1M994.1 575.8L1003.1 576.3M999.1 577.0L998.1 575.1M1028.7 577.8L1037.9 578.4M1034.0 579.1L1032.6 577.2M1064.1 580.0L1073.4 580.5M1069.6 581.2L1067.8 579.3M1100.2 582.1L1109.7 582.7M1106.0 583.4L1103.9 581.4M1137.1 584.3L1146.9 584.9M1143.3 585.6L1140.7 583.6M957.8 567.1L966.2 567.5M962.3 568.1L961.7 566.5M990.4 568.9L999.0 569.4M995.2 570.1L994.2 568.3M1023.7 570.9L1032.5 571.4M1028.7 572.0L1027.4 570.2M1057.7 572.8L1066.7 573.3M1063.0 574.0L1061.4 572.2M1092.4 574.8L1101.6 575.3M1098.0 576.0L1096.0 574.2M1127.9 576.9L1137.2 577.4M1133.7 578.1L1131.4 576.2M955.5 560.8L963.6 561.3M959.8 561.8L959.2 560.3M986.9 562.6L995.2 563.0M991.5 563.6L990.6 562.0M1019.0 564.4L1027.5 564.8M1023.9 565.4L1022.6 563.8M1051.8 566.2L1060.4 566.7M1056.9 567.3L1055.3 565.6M1085.2 568.0L1094.0 568.5M1090.5 569.1L1088.7 567.4M1119.3 569.9L1128.3 570.4M1124.9 571.1L1122.7 569.3M1154.1 571.9L1163.3 572.4M1160.0 573.0L1157.5 571.3M953.3 555.0L961.2 555.4M957.5 555.9L956.9 554.5M983.7 556.6L991.7 557.1M988.1 557.6L987.3 556.1M1014.7 558.3L1022.8 558.7M1019.3 559.3L1018.2 557.8M1046.3 560.0L1054.6 560.5M1051.1 561.0L1049.7 559.5M1078.5 561.7L1087.0 562.2M1083.6 562.8L1081.8 561.2M1111.3 563.5L1120.0 564.0M1116.7 564.6L1114.6 562.9M1144.9 565.3L1153.7 565.8M1150.5 566.4L1148.1 564.7M951.3 549.5L958.9 549.9M955.3 550.4L954.8 549.1M980.7 551.1L988.4 551.5M984.9 552.0L984.1 550.6M1010.6 552.6L1018.5 553.0M1015.1 553.6L1014.0 552.1M1041.1 554.2L1049.1 554.6M1045.8 555.2L1044.4 553.7M1072.2 555.9L1080.4 556.3M1077.1 556.8L1075.5 555.3M1103.9 557.5L1112.2 557.9M1109.0 558.5L1107.1 557.0M1136.2 559.2L1144.7 559.6M1141.6 560.2L1139.3 558.6M949.4 544.4L956.7 544.8M953.3 545.3L952.8 544.0M977.8 545.9L985.3 546.2M981.9 546.7L981.2 545.4M1006.8 547.3L1014.4 547.7M1011.1 548.2L1010.1 546.9M1036.3 548.8L1044.0 549.2M1040.8 549.7L1039.5 548.3M1066.3 550.3L1074.2 550.7M1071.0 551.2L1069.5 549.9M1096.9 551.9L1105.0 552.3M1101.8 552.8L1100.1 551.4M1128.1 553.5L1136.3 553.9M1133.3 554.4L1131.2 553.0M975.1 541.0L982.4 541.3M979.1 541.8L978.4 540.5M1003.2 542.4L1010.6 542.7M1007.4 543.2L1006.4 541.9M1031.8 543.8L1039.3 544.1M1036.1 544.6L1034.9 543.3M1060.8 545.2L1068.5 545.6M1065.3 546.0L1063.9 544.7M1090.4 546.6L1098.2 547.0M1095.1 547.5L1093.5 546.2M1120.5 548.1L1128.5 548.5M1125.5 549.0L1123.5 547.6M1151.2 549.6L1159.3 550.0M1156.4 550.5L1154.2 549.1M1055.6 540.3L1063.0 540.7M1060.0 541.1L1058.7 539.9M1084.3 541.7L1091.8 542.1M1088.8 542.5L1087.3 541.3M1113.4 543.1L1121.1 543.5M1118.2 543.9L1116.4 542.6M1143.1 544.5L1150.9 544.9M1148.1 545.3L1146.0 544.0" stroke-width="1.7"/></g>
 <ellipse cx="700" cy="745" rx="45" ry="50" fill="#0a5aa8" opacity="0.35" filter="url(#blur2)"/>
 <!-- dark frame -->
 <polygon points="424.5,282.7 875.2,248.8 857.8,731.2 431.6,683.3" fill="#1f2741"/>
 <polygon points="445,303.3 847.7,276.4 833.6,704 447,664" fill="url(#inner)"/>
 <!-- cyan box -->
 <polygon points="411.7,351.2 757.9,336.4 749,709.9 419.5,672.8" fill="#6ae0f2" fill-opacity="0.28"/>
 <polygon points="429,355 446.5,353.5 447,664 432,673" fill="#2c8a92" fill-opacity="0.9"/>
 <polygon points="419,672.8 431.6,683.3 447,664 749,696.5 749,709.9" fill="#1b9a9c" fill-opacity="0.9"/>
 <polygon points="419.5,672.8 524,593 739.2,608.5 749,709.9" fill="#40d8e0" fill-opacity="0.22"/>
 <g fill="none" stroke="#8ef3f5" stroke-linejoin="round" filter="url(#blur1)">
  <polygon points="411.7,351.2 757.9,336.4 749,709.9 419.5,672.8" stroke-width="2"/>
  <path d="M412.2 351.5 L419.8 672.5 L749 709.5 L757.5 337" stroke-width="3.4"/>
  <polyline points="411.7,351.2 524,386.3 742.3,378.5 757.9,336.4" stroke-width="2"/>
  <polyline points="524,386.3 524,593 739.2,608.5 742.3,378.5" stroke-width="1.2" stroke-opacity="0.7"/>
  <polyline points="419.5,672.8 524,593" stroke-width="1.5" stroke-opacity="0.6"/>
  <polyline points="749,709.9 739.2,608.5" stroke-width="1.2" stroke-opacity="0.5"/>
  <polygon points="415.5,355 753.5,340.5 745,704 423,669" stroke-width="1" stroke-opacity="0.5"/>
 </g>
 <!-- bottle -->
 <g filter="url(#blur1)">
  <path d="M589 433 L589 412 L624 412 L624 433 C638 437 649.5 446 649.5 462 L641.7 632 C641 639 636 641 630 641 L578 641 C572 641 568.5 638 568 632 L556 462 C556 446 567 437 589 433 Z" fill="#b2dbee" fill-opacity="0.85" stroke="#e6f4fa" stroke-width="2.6"/>
  <path d="M565 503 L643.5 501 L639 630 C638.5 635 635 637 629 637 L580 637 C575 637 572.5 635 572 630 Z" fill="url(#liq)" fill-opacity="0.92" stroke="#e2dcf2" stroke-width="1.3"/>
    <rect x="578.6" y="397" width="55.4" height="14.6" rx="3" fill="#bfe2ef" stroke="#eaf6fa" stroke-width="1.5"/>
  <rect x="590" y="399" width="33" height="13" fill="#a9a9a8"/>
  <path d="M584 376 C584 370.5 629 370.5 629 376 L629 398 L584 398 Z" fill="#d6b174"/>
  <path d="M584 388 L629 388" stroke="#ecdcbf" stroke-width="1.5"/>
  <path d="M606 373 L606 384" stroke="#9a7440" stroke-width="1.5"/>
 </g>
 <g opacity="0.18" stroke="#ffffff" stroke-width="0.8">
  <path d="M556 470 L600 426 M556 490 L620 426 M558 508 L650 416 M560 526 L650 436 M561 545 L650 456 M562 564 L650 476 M563 583 L649 497 M564 602 L648 518 M566 620 L647 539 M570 636 L646 560 M590 636 L645 581 M610 636 L644 602 M628 638 L643 623"/>
 </g>
 <!-- gizmo -->
 <path d="M605 635 L605 577" stroke="#2f4ff0" stroke-width="3"/>
 <polygon points="605,557.5 597.5,579 612.5,579" fill="#2f4ff0"/>
 <path d="M605 635 L668 638.5" stroke="#19d05a" stroke-width="3.2"/>
 <polygon points="685.6,641.3 663.5,630 663,650" fill="#19d05a"/>
 <circle cx="615.8" cy="617" r="6" fill="#ee3355"/>
 <path d="M608 630 L613 620" stroke="#ee3355" stroke-width="2.5"/>
 <rect x="666.4" y="561.6" width="18.3" height="18.3" fill="#ee3355"/>
 <path d="M617.5 546.5 L617 561.5" stroke="#1fc85a" stroke-width="2.5"/>
 <path d="M671.5 621 L688 618.5" stroke="#2f4ff0" stroke-width="3.5"/>
 <!-- white boxes -->
 <rect x="36.9" y="663.9" width="102" height="101.7" fill="#fff"/>
 <rect x="143.9" y="663.9" width="102" height="101.7" fill="#fff"/>
 <rect x="251.8" y="663.9" width="102.3" height="101.7" fill="#fff"/>
</svg>


<svg style="left:4px;top:142px" width="26" height="26" viewBox="4 142 26 26">
 <path d="M7 146 C9 144 12 144.5 14 145.5 C16 146 18 146 20 145.5 C22 144.5 25.5 144 26.5 147 C27.5 150 27.6 153.5 27.3 156 L20 156.5 C17.5 156.8 13 156.5 10.5 157.5 C8 159.5 6.5 159.5 6 157 C5.5 153 5.8 149 7 146 Z" fill="#1aa2e6"/>
 <path d="M14.5 165.5 L23.8 156.5" stroke="#1aa2e6" stroke-width="2.6" stroke-linecap="round"/>
 <path d="M19.5 152.5 C21.5 151 24.5 152 25.5 153.5 L28.5 156.5 L27 158.5 L24.5 156 L22.5 155.5 Z" fill="#1aa2e6" stroke="#282a33" stroke-width="0.8"/>
</svg>
<div class="t" style="left:36.5px;top:148.0px;font-size:17px;color:#1aa2e6;">Camera Capture Tutorial</div>
<svg style="left:229.5px;top:149.5px" width="11.5" height="11.5" viewBox="0 0 11.5 11.5"><path d="M0.8 0.8 L10.7 10.7 M10.7 0.8 L0.8 10.7" stroke="#1aa2e6" stroke-width="2"/></svg>
<svg style="left:1164px;top:144px" width="25" height="24" viewBox="1164 144 25 24">
 <g fill="#1aa2e6"><rect x="1164.8" y="144.2" width="4.2" height="4.5"/><rect x="1170.8" y="144.2" width="17.2" height="4.5"/>
 <rect x="1170.8" y="150.2" width="4.2" height="4.3"/><rect x="1176.8" y="150.2" width="11.2" height="4.3"/>
 <rect x="1170.8" y="156" width="4.2" height="4.3"/><rect x="1176.8" y="156" width="11.2" height="4.3"/>
 <rect x="1164.8" y="162.2" width="4.2" height="4.5"/><rect x="1170.8" y="162.2" width="17.2" height="4.5"/></g>
</svg>
<div class="t" style="left:1195px;top:148.0px;font-size:17px;color:#1aa2e6;">Hierarchy</div>
<svg style="left:1274.5px;top:150.5px" width="11" height="11" viewBox="0 0 11 11"><path d="M0.8 0.8 L10.2 10.2 M10.2 0.8 L0.8 10.2" stroke="#1aa2e6" stroke-width="2"/></svg>
<svg style="left:1162px;top:614px" width="30" height="30" viewBox="1162 614 30 30">
 <g fill="#1aa2e6"><circle cx="1175.8" cy="627.4" r="8.2"/><rect x="1173.6" y="616.3" width="4.4" height="4" transform="rotate(0 1175.8 627.4)"/><rect x="1173.6" y="616.3" width="4.4" height="4" transform="rotate(45 1175.8 627.4)"/><rect x="1173.6" y="616.3" width="4.4" height="4" transform="rotate(90 1175.8 627.4)"/><rect x="1173.6" y="616.3" width="4.4" height="4" transform="rotate(180 1175.8 627.4)"/><rect x="1173.6" y="616.3" width="4.4" height="4" transform="rotate(225 1175.8 627.4)"/><rect x="1173.6" y="616.3" width="4.4" height="4" transform="rotate(270 1175.8 627.4)"/><rect x="1173.6" y="616.3" width="4.4" height="4" transform="rotate(315 1175.8 627.4)"/></g>
 <circle cx="1175.8" cy="627.4" r="3.5" fill="#282a33"/>
 <path d="M1174.5 639 L1185.5 628" stroke="#282a33" stroke-width="6" stroke-linecap="round"/>
 <circle cx="1186.8" cy="627" r="5.4" fill="#282a33"/>
 <path d="M1174.8 638.6 L1184.8 628.6" stroke="#1aa2e6" stroke-width="3.2" stroke-linecap="round"/>
 <circle cx="1186.8" cy="627" r="3.8" fill="#1aa2e6"/>
 <path d="M1186.8 627 L1190.5 623.3" stroke="#282a33" stroke-width="2.6"/>
</svg>
<div class="t" style="left:1195.5px;top:619.7px;font-size:17px;color:#1aa2e6;">Properties</div>
<svg style="left:1283px;top:622.9px" width="11.2" height="11.2" viewBox="0 0 11.2 11.2"><path d="M0.8 0.8 L10.399999999999999 10.399999999999999 M10.399999999999999 0.8 L0.8 10.399999999999999" stroke="#1aa2e6" stroke-width="2"/></svg>
<svg style="left:4px;top:804px" width="28" height="30" viewBox="4 804 28 30">
 <path d="M6.8 825 L6.8 808.8 L14.8 808.8 L16.5 810.7 L25.5 810.7 L25.5 812.5" fill="none" stroke="#1aa2e6" stroke-width="1.5"/>
 <polygon points="10.3,812.2 29,812.2 29,815.3 21,818.5 13.5,821.5 16.5,825.2 6.5,825.2" fill="#1aa2e6"/>
 <path d="M29 816.5 C26 816.8 23 818.5 20.5 821.5 L17.3 824.8 L21.3 828.8 L24.8 825.5 C27.5 823 29 820 29 816.5 Z" fill="#1aa2e6" stroke="#282a33" stroke-width="1"/>
 <circle cx="24.8" cy="820.8" r="1.4" fill="#282a33"/>
 <polygon points="13.3,821.7 20.3,818.6 16.8,823.6" fill="#1aa2e6" stroke="#282a33" stroke-width="0.9"/>
 <polygon points="15.6,826.6 17,825.2 19.8,828.1 18.4,829.6" fill="#1aa2e6"/>
 <polygon points="24.6,826.3 22.4,831 21.6,828.4" fill="#1aa2e6"/>
</svg>
<div class="t" style="left:36px;top:812.2px;font-size:17px;color:#1aa2e6;">Project Content</div>
<svg style="left:163.5px;top:813px" width="11" height="11" viewBox="0 0 11 11"><path d="M0.8 0.8 L10.2 10.2 M10.2 0.8 L0.8 10.2" stroke="#1aa2e6" stroke-width="2"/></svg>
<svg style="left:186px;top:806px" width="28" height="28" viewBox="186 806 28 28">
 <polygon points="199.5,808.5 210.2,814.5 210.2,826 199.5,832 188.8,826 188.8,814.5" fill="#50545f"/>
 <circle cx="199.5" cy="820.2" r="6.3" fill="#282a33"/>
 <circle cx="199.5" cy="820" r="4.6" fill="#50545f"/>
</svg>
<div class="t" style="left:219px;top:812.2px;font-size:17px;color:#5d616c;">Core Content</div>
<svg style="left:327px;top:814.5px" width="11" height="11" viewBox="0 0 11 11"><path d="M0.8 0.8 L10.2 10.2 M10.2 0.8 L0.8 10.2" stroke="#5d616c" stroke-width="1.8"/></svg>
<svg style="left:352px;top:806px" width="26" height="28" viewBox="352 806 26 28">
 <rect x="356.8" y="810.5" width="15.8" height="20.2" rx="1.5" fill="none" stroke="#50545f" stroke-width="1.8"/>
 <rect x="361" y="808.5" width="7.4" height="4.2" rx="1" fill="#50545f"/>
 <path d="M360 817.5 L369.5 817.5 M360 821 L369.5 821 M360 824.5 L369.5 824.5" stroke="#50545f" stroke-width="1.5"/>
</svg>
<div class="t" style="left:383px;top:812.2px;font-size:17px;color:#5d616c;">Event Log</div>
<svg style="left:466px;top:814.5px" width="11" height="11" viewBox="0 0 11 11"><path d="M0.8 0.8 L10.2 10.2 M10.2 0.8 L0.8 10.2" stroke="#5d616c" stroke-width="1.8"/></svg>
<div class="t" style="left:1171.5px;top:195.3px;font-size:16px;font-weight:bold;color:#f0861a;">Main</div>
<div class="btn" style="left:1872px;top:183px;width:38px;height:38px"></div>
<svg style="left:1872px;top:183px" width="38" height="38" viewBox="1872 183 38 38">
 <path d="M1881 192.5 L1900 190.5 L1900.3 194.5 L1881.3 196.5 Z" fill="#fff"/>
 <path d="M1885 192 L1887 195.5 M1890 191.5 L1892 195 M1895 191 L1897 194.5" stroke="#1aa2e6" stroke-width="1.3"/>
 <rect x="1881" y="198" width="19.4" height="13.8" fill="#fff"/>
 <path d="M1884 198 L1886 200 M1889 198 L1891 200 M1894 198 L1896 200" stroke="#1aa2e6" stroke-width="1.3"/>
 <path d="M1896.5 201.5 C1894 201.7 1891.8 203 1890 205.5 L1892 207.5 C1894.5 205.8 1896.2 204 1896.5 201.5 Z M1889.5 206 L1887.5 208 L1888.5 209 Z M1891.5 208 L1891.5 210 L1892.5 209 Z" fill="#1aa2e6"/>
</svg>
<div class="a" style="left:1169px;top:226px;width:500px;height:37px;background:#1b1d25;border-radius:6px"></div>
<svg style="left:1178px;top:232px" width="24" height="24" viewBox="1178 232 24 24">
 <circle cx="1192.2" cy="240.6" r="5.8" fill="none" stroke="#1aa2e6" stroke-width="1.7"/>
 <path d="M1188.2 245 L1182 251.5" stroke="#1aa2e6" stroke-width="2.8" stroke-linecap="round"/>
</svg>
<div class="t" style="left:1204.5px;top:235.7px;font-size:15px;color:#7f828b;">Search</div>
<div class="a" style="left:1787px;top:226px;width:38px;height:37px;background:#1b1d25;border-radius:5px"></div>
<svg style="left:1787px;top:226px" width="38" height="37" viewBox="1787 226 38 37">
 <polygon points="1806,233.7 1814.5,238 1806,242.3 1797.5,238" fill="#e8841c"/>
 <polygon points="1795.8,239.8 1804.8,244.3 1804.8,255 1795.8,250.5" fill="#e8841c"/>
 <polygon points="1816.3,239.8 1807.2,244.3 1807.2,255 1816.3,250.5" fill="#e8841c"/>
 <circle cx="1813.5" cy="250.5" r="5.6" fill="#1b1d25"/>
 <circle cx="1813.5" cy="250.5" r="4.4" fill="#e8841c"/>
</svg>
<div class="btn" style="left:1830px;top:226px;width:37px;height:37px"></div>
<svg style="left:1830px;top:226px" width="37" height="37" viewBox="1830 226 37 37">
 <path d="M1839 233.8 L1856.2 233.8 L1849.5 244 L1845.8 244 Z" fill="#fff"/>
 <path d="M1845.8 246 L1849.8 246 L1849.8 250.5 L1845.8 253.6 Z" fill="#fff"/>
</svg>
<div class="btn" style="left:1872px;top:226px;width:38px;height:37px"></div>
<svg style="left:1872px;top:226px" width="38" height="37" viewBox="1872 226 38 37">
 <path d="M1882.5 242.5 L1891 234.8 L1899.5 242.5" fill="none" stroke="#fff" stroke-width="2.4"/>
 <path d="M1891 235.5 L1891 248.5" stroke="#fff" stroke-width="2.4"/>
 <rect x="1882" y="251" width="18" height="2.8" fill="#fff"/>
</svg>
<div class="a" style="left:1166px;top:504px;width:746px;height:33px;border:2px solid #1aa2e6"></div>
<svg style="left:1166.8px;top:285.0px" width="10" height="13" viewBox="0 0 10 13"><path d="M1.7 1.6 L8 6.5 L1.7 11.4 Z" fill="none" stroke="#8a8c93" stroke-width="1.4"/></svg>
<svg style="left:1184.3px;top:284.0px" width="20" height="16" viewBox="1184.3 284.0 20 16"><path d="M1185.1 297.5 L1185.1 286.0 L1190.3 286.0 L1191.8 287.5 L1198.8 287.5 L1198.8 289.5" fill="none" stroke="#fff" stroke-width="1.5"/><path d="M1187.8 290.0 L1201.8 290.0 L1199.5 298.5 L1185.1 298.5 Z" fill="#fff"/></svg>
<div class="t" style="left:1211.6px;top:285.0px;font-size:17px;color:#e6e6e6;">Misc</div>
<svg style="left:1860px;top:285.0px" width="44" height="18" viewBox="1860 285.0 44 18"><path d="M1861.3 293.5 Q1869.5 284.3 1877.7 293.5 Q1869.5 302.7 1861.3 293.5 Z" fill="none" stroke="#fff" stroke-width="2" stroke-linejoin="round"/><circle cx="1869.5" cy="293.5" r="2.4" fill="#fff"/><path d="M1891 292.0 L1891 289.5 A3.5 3.5 0 0 1 1898 289.5 L1898 292.0" fill="none" stroke="#1c1f27" stroke-width="2.2"/><rect x="1888.3" y="291.5" width="12.5" height="9" rx="1.3" fill="#1c1f27"/><path d="M1894.5 295.0 L1894.5 298.0" stroke="#272a33" stroke-width="1.4"/></svg>
<svg style="left:1166.8px;top:320.5px" width="11" height="10" viewBox="0 0 11 10"><path d="M10 0.3 L10 9.6 L0.2 9.6 Z" fill="#a9abb0"/></svg>
<svg style="left:1183.3px;top:317.0px" width="20" height="20" viewBox="1183.3 317.0 20 20"><path d="M1184.1 329.5 L1184.1 318.0 L1189.3 318.0 L1190.8 319.5 L1197.8 319.5 L1197.8 321.5" fill="none" stroke="#fff" stroke-width="1.5"/><path d="M1186.8 322.0 L1200.8 322.0 L1198.5 330.5 L1184.1 330.5 Z" fill="#fff"/><circle cx="1195.8" cy="330.0" r="3.6" fill="#282a33"/><path d="M1195.8 334.5 L1193.1 330.8 A2.9 2.9 0 1 1 1198.5 330.8 Z" fill="#fff"/><circle cx="1195.8" cy="329.3" r="1.1" fill="#282a33"/></svg>
<div class="t" style="left:1211.6px;top:318.0px;font-size:17px;color:#e6e6e6;">Icon Generator</div>
<svg style="left:1860px;top:318.0px" width="44" height="18" viewBox="1860 318.0 44 18"><path d="M1861.3 326.5 Q1869.5 317.3 1877.7 326.5 Q1869.5 335.7 1861.3 326.5 Z" fill="none" stroke="#fff" stroke-width="2" stroke-linejoin="round"/><circle cx="1869.5" cy="326.5" r="2.4" fill="#fff"/><path d="M1891 325.0 L1891 322.5 A3.5 3.5 0 0 1 1898 322.5 L1898 325.0" fill="none" stroke="#1c1f27" stroke-width="2.2"/><rect x="1888.3" y="324.5" width="12.5" height="9" rx="1.3" fill="#1c1f27"/><path d="M1894.5 328.0 L1894.5 331.0" stroke="#272a33" stroke-width="1.4"/></svg>
<svg style="left:1179.9px;top:350.4px" width="10" height="13" viewBox="0 0 10 13"><path d="M1.7 1.6 L8 6.5 L1.7 11.4 Z" fill="none" stroke="#8a8c93" stroke-width="1.4"/></svg>
<svg style="left:1196px;top:350px" width="20" height="18" viewBox="1196 350 20 18"><rect x="1197.9" y="352" width="15.2" height="12.8" fill="none" stroke="#fff" stroke-width="1.7"/><rect x="1197.9" y="352" width="15.2" height="2.6" fill="#fff"/></svg>
<div class="t" style="left:1224.7px;top:350.4px;font-size:17px;color:#e6e6e6;">UI Container (client)</div>
<svg style="left:1860px;top:350.4px" width="44" height="18" viewBox="1860 350.4 44 18"><path d="M1861.3 358.9 Q1869.5 349.7 1877.7 358.9 Q1869.5 368.09999999999997 1861.3 358.9 Z" fill="none" stroke="#fff" stroke-width="2" stroke-linejoin="round"/><circle cx="1869.5" cy="358.9" r="2.4" fill="#fff"/><path d="M1891 357.4 L1891 354.9 A3.5 3.5 0 0 1 1898 354.9 L1898 357.4" fill="none" stroke="#1c1f27" stroke-width="2.2"/><rect x="1888.3" y="356.9" width="12.5" height="9" rx="1.3" fill="#1c1f27"/><path d="M1894.5 360.4 L1894.5 363.4" stroke="#272a33" stroke-width="1.4"/></svg>
<svg style="left:1180.0px;top:385.8px" width="11" height="10" viewBox="0 0 11 10"><path d="M10 0.3 L10 9.6 L0.2 9.6 Z" fill="#a9abb0"/></svg>
<svg style="left:1196.5px;top:382.3px" width="20" height="20" viewBox="1196.5 382.3 20 20"><path d="M1197.3 394.8 L1197.3 383.3 L1202.5 383.3 L1204.0 384.8 L1211.0 384.8 L1211.0 386.8" fill="none" stroke="#fff" stroke-width="1.5"/><path d="M1200.0 387.3 L1214.0 387.3 L1211.7 395.8 L1197.3 395.8 Z" fill="#fff"/><polygon points="1207.5,391.3 1214.5,391.3 1214.5,399.8 1207.5,399.8" fill="#282a33"/><polygon points="1211.0,391.6 1214.3,393.3 1211.0,394.90000000000003 1207.7,393.3" fill="#fff"/><polygon points="1207.7,394.1 1210.5,395.5 1210.5,399.1 1207.7,397.7" fill="#fff"/><polygon points="1214.3,394.1 1211.5,395.5 1211.5,399.1 1214.3,397.7" fill="#fff"/></svg>
<div class="t" style="left:1224.8px;top:383.3px;font-size:17px;color:#e6e6e6;">Generator (client)</div>
<svg style="left:1860px;top:383.3px" width="44" height="18" viewBox="1860 383.3 44 18"><path d="M1861.3 391.8 Q1869.5 382.6 1877.7 391.8 Q1869.5 401.0 1861.3 391.8 Z" fill="none" stroke="#fff" stroke-width="2" stroke-linejoin="round"/><circle cx="1869.5" cy="391.8" r="2.4" fill="#fff"/><path d="M1891 390.3 L1891 387.8 A3.5 3.5 0 0 1 1898 387.8 L1898 390.3" fill="none" stroke="#1c1f27" stroke-width="2.2"/><rect x="1888.3" y="389.8" width="12.5" height="9" rx="1.3" fill="#1c1f27"/><path d="M1894.5 393.3 L1894.5 396.3" stroke="#272a33" stroke-width="1.4"/></svg>
<svg style="left:1192.2px;top:415.8px" width="10" height="13" viewBox="0 0 10 13"><path d="M1.7 1.6 L8 6.5 L1.7 11.4 Z" fill="none" stroke="#8a8c93" stroke-width="1.4"/></svg>
<svg style="left:1209.7px;top:414.8px" width="20" height="20" viewBox="1209.7 414.8 20 20"><path d="M1210.5 427.3 L1210.5 415.8 L1215.7 415.8 L1217.2 417.3 L1224.2 417.3 L1224.2 419.3" fill="none" stroke="#fff" stroke-width="1.5"/><path d="M1213.2 419.8 L1227.2 419.8 L1224.9 428.3 L1210.5 428.3 Z" fill="#fff"/><polygon points="1220.7,423.8 1227.7,423.8 1227.7,432.3 1220.7,432.3" fill="#282a33"/><polygon points="1224.2,424.1 1227.5,425.8 1224.2,427.40000000000003 1220.9,425.8" fill="#fff"/><polygon points="1220.9,426.6 1223.7,428.0 1223.7,431.6 1220.9,430.2" fill="#fff"/><polygon points="1227.5,426.6 1224.7,428.0 1224.7,431.6 1227.5,430.2" fill="#fff"/></svg>
<div class="t" style="left:1236.5px;top:415.8px;font-size:17px;color:#e6e6e6;">Components (client)</div>
<svg style="left:1860px;top:415.8px" width="44" height="18" viewBox="1860 415.8 44 18"><path d="M1861.3 424.3 Q1869.5 415.1 1877.7 424.3 Q1869.5 433.5 1861.3 424.3 Z" fill="none" stroke="#fff" stroke-width="2" stroke-linejoin="round"/><circle cx="1869.5" cy="424.3" r="2.4" fill="#fff"/><path d="M1891 422.8 L1891 420.3 A3.5 3.5 0 0 1 1898 420.3 L1898 422.8" fill="none" stroke="#1c1f27" stroke-width="2.2"/><rect x="1888.3" y="422.3" width="12.5" height="9" rx="1.3" fill="#1c1f27"/><path d="M1894.5 425.8 L1894.5 428.8" stroke="#272a33" stroke-width="1.4"/></svg>
<svg style="left:1192.2px;top:450.7px" width="11" height="10" viewBox="0 0 11 10"><path d="M10 0.3 L10 9.6 L0.2 9.6 Z" fill="#a9abb0"/></svg>
<svg style="left:1208.7px;top:447.2px" width="20" height="20" viewBox="1208.7 447.2 20 20"><path d="M1209.5 459.7 L1209.5 448.2 L1214.7 448.2 L1216.2 449.7 L1223.2 449.7 L1223.2 451.7" fill="none" stroke="#fff" stroke-width="1.5"/><path d="M1212.2 452.2 L1226.2 452.2 L1223.9 460.7 L1209.5 460.7 Z" fill="#fff"/><polygon points="1219.7,456.2 1226.7,456.2 1226.7,464.7 1219.7,464.7" fill="#282a33"/><polygon points="1223.2,456.5 1226.5,458.2 1223.2,459.8 1219.9,458.2" fill="#fff"/><polygon points="1219.9,459.0 1222.7,460.4 1222.7,464.0 1219.9,462.59999999999997" fill="#fff"/><polygon points="1226.5,459.0 1223.7,460.4 1223.7,464.0 1226.5,462.59999999999997" fill="#fff"/></svg>
<div class="t" style="left:1236.5px;top:448.2px;font-size:17px;color:#e6e6e6;">Icon Container (client)</div>
<svg style="left:1860px;top:448.2px" width="44" height="18" viewBox="1860 448.2 44 18"><path d="M1861.3 456.7 Q1869.5 447.5 1877.7 456.7 Q1869.5 465.9 1861.3 456.7 Z" fill="none" stroke="#fff" stroke-width="2" stroke-linejoin="round"/><circle cx="1869.5" cy="456.7" r="2.4" fill="#fff"/><path d="M1891 455.2 L1891 452.7 A3.5 3.5 0 0 1 1898 452.7 L1898 455.2" fill="none" stroke="#1c1f27" stroke-width="2.2"/><rect x="1888.3" y="454.7" width="12.5" height="9" rx="1.3" fill="#1c1f27"/><path d="M1894.5 458.2 L1894.5 461.2" stroke="#272a33" stroke-width="1.4"/></svg>
<svg style="left:1205.0px;top:483.0px" width="11" height="10" viewBox="0 0 11 10"><path d="M10 0.3 L10 9.6 L0.2 9.6 Z" fill="#a9abb0"/></svg>
<svg style="left:1221.5px;top:479.5px" width="20" height="20" viewBox="1221.5 479.5 20 20"><path d="M1222.3 492.0 L1222.3 480.5 L1227.5 480.5 L1229.0 482.0 L1236.0 482.0 L1236.0 484.0" fill="none" stroke="#1aa2e6" stroke-width="1.5"/><path d="M1225.0 484.5 L1239.0 484.5 L1236.7 493.0 L1222.3 493.0 Z" fill="#1aa2e6"/><polygon points="1232.5,488.5 1239.5,488.5 1239.5,497.0 1232.5,497.0" fill="#282a33"/><polygon points="1236.0,488.8 1239.3,490.5 1236.0,492.1 1232.7,490.5" fill="#1aa2e6"/><polygon points="1232.7,491.3 1235.5,492.7 1235.5,496.3 1232.7,494.9" fill="#1aa2e6"/><polygon points="1239.3,491.3 1236.5,492.7 1236.5,496.3 1239.3,494.9" fill="#1aa2e6"/></svg>
<div class="t" style="left:1249.6px;top:480.5px;font-size:17px;color:#1ea3e4;">Bottle 1 Icon (client)</div>
<svg style="left:1860px;top:480.5px" width="44" height="18" viewBox="1860 480.5 44 18"><path d="M1861.3 489.0 Q1869.5 479.8 1877.7 489.0 Q1869.5 498.2 1861.3 489.0 Z" fill="none" stroke="#fff" stroke-width="2" stroke-linejoin="round"/><circle cx="1869.5" cy="489.0" r="2.4" fill="#fff"/><path d="M1891 487.5 L1891 485.0 A3.5 3.5 0 0 1 1898 485.0 L1898 487.5" fill="none" stroke="#1c1f27" stroke-width="2.2"/><rect x="1888.3" y="487.0" width="12.5" height="9" rx="1.3" fill="#1c1f27"/><path d="M1894.5 490.5 L1894.5 493.5" stroke="#272a33" stroke-width="1.4"/></svg>
<svg style="left:1234px;top:511px" width="18" height="19" viewBox="1234 511 18 19"><polygon points="1242.5,512.2 1250.3,516 1242.5,519.8 1234.8,516" fill="#fff"/><polygon points="1234.8,517.5 1241.7,520.9 1241.7,528.9 1234.8,525.3" fill="#fff"/><polygon points="1250.3,517.5 1243.4,520.9 1243.4,528.9 1250.3,525.3" fill="#fff"/></svg>
<div class="t" style="left:1261.7px;top:513.2px;font-size:17px;color:#e6e6e6;">Bottle (client)</div>
<svg style="left:1860px;top:513.2px" width="44" height="18" viewBox="1860 513.2 44 18"><path d="M1861.3 521.7 Q1869.5 512.5 1877.7 521.7 Q1869.5 530.9000000000001 1861.3 521.7 Z" fill="none" stroke="#fff" stroke-width="2" stroke-linejoin="round"/><circle cx="1869.5" cy="521.7" r="2.4" fill="#fff"/><path d="M1891 520.2 L1891 517.7 A3.5 3.5 0 0 1 1898 517.7 L1898 520.2" fill="none" stroke="#1c1f27" stroke-width="2.2"/><rect x="1888.3" y="519.7" width="12.5" height="9" rx="1.3" fill="#1c1f27"/><path d="M1894.5 523.2 L1894.5 526.2" stroke="#272a33" stroke-width="1.4"/></svg>
<svg style="left:1179.9px;top:545.5px" width="10" height="13" viewBox="0 0 10 13"><path d="M1.7 1.6 L8 6.5 L1.7 11.4 Z" fill="none" stroke="#8a8c93" stroke-width="1.4"/></svg>
<svg style="left:1197.4px;top:544.5px" width="20" height="20" viewBox="1197.4 544.5 20 20"><path d="M1198.2 557.0 L1198.2 545.5 L1203.4 545.5 L1204.9 547.0 L1211.9 547.0 L1211.9 549.0" fill="none" stroke="#fff" stroke-width="1.5"/><path d="M1200.9 549.5 L1214.9 549.5 L1212.6000000000001 558.0 L1198.2 558.0 Z" fill="#fff"/><polygon points="1208.4,553.5 1215.4,553.5 1215.4,562.0 1208.4,562.0" fill="#282a33"/><polygon points="1211.9,553.8 1215.2,555.5 1211.9,557.1 1208.6000000000001,555.5" fill="#fff"/><polygon points="1208.6000000000001,556.3 1211.4,557.7 1211.4,561.3 1208.6000000000001,559.9" fill="#fff"/><polygon points="1215.2,556.3 1212.4,557.7 1212.4,561.3 1215.2,559.9" fill="#fff"/></svg>
<div class="t" style="left:1224.6px;top:545.5px;font-size:17px;color:#e6e6e6;">Items (client)</div>
<svg style="left:1860px;top:545.5px" width="44" height="18" viewBox="1860 545.5 44 18"><path d="M1861.3 554.0 Q1869.5 544.8 1877.7 554.0 Q1869.5 563.2 1861.3 554.0 Z" fill="none" stroke="#fff" stroke-width="2" stroke-linejoin="round"/><circle cx="1869.5" cy="554.0" r="2.4" fill="#fff"/><path d="M1891 552.5 L1891 550.0 A3.5 3.5 0 0 1 1898 550.0 L1898 552.5" fill="none" stroke="#1c1f27" stroke-width="2.2"/><rect x="1888.3" y="552.0" width="12.5" height="9" rx="1.3" fill="#1c1f27"/><path d="M1894.5 555.5 L1894.5 558.5" stroke="#272a33" stroke-width="1.4"/></svg>
<svg style="left:1172px;top:659px" width="34" height="35" viewBox="1172 659 34 35">
 <polygon points="1189.5,660.5 1204.2,667.5 1189.5,674.5 1174.9,667.5" fill="#1aa2e6"/>
 <polygon points="1174.9,669.8 1188.3,676.3 1188.3,692 1174.9,685.5" fill="#1aa2e6"/>
 <polygon points="1204.2,669.8 1190.8,676.3 1190.8,692 1204.2,685.5" fill="#1aa2e6"/>
</svg>
<div class="a" style="left:1221px;top:656px;width:492px;height:39.5px;background:#1b1d25;border-radius:6px"></div>
<div class="t" style="left:1228px;top:668.0px;font-size:16px;color:#f0f0f0;">Bottle</div>
<svg style="left:1716px;top:662px" width="24" height="26" viewBox="1716 662 24 26">
 <path d="M1722.5 670 A6.8 6.8 0 1 1 1723 681" fill="none" stroke="#3d414c" stroke-width="2.3"/>
 <polygon points="1719.5,668 1726.5,667.5 1723.5,673.5" fill="#3d414c"/>
</svg>
<svg style="left:1748px;top:661px" width="30" height="30" viewBox="1748 661 30 30">
 <path d="M1754 668.5 A11 11 0 0 1 1771.5 668.5 M1774.5 674 A11 11 0 0 1 1768 688 M1758 688 A11 11 0 0 1 1751.5 674" fill="none" stroke="#1aa2e6" stroke-width="2.2"/>
 <circle cx="1752.4" cy="669" r="2.4" fill="#1aa2e6"/><circle cx="1773.3" cy="669" r="2.4" fill="#1aa2e6"/><circle cx="1762.7" cy="687.3" r="2.4" fill="#1aa2e6"/>
 <polygon points="1762.8,668.5 1768.3,671.3 1762.8,674 1757.3,671.3" fill="#1aa2e6"/>
 <polygon points="1757,672.5 1762.2,675 1762.2,681.5 1757,679" fill="#1aa2e6"/>
 <polygon points="1768.5,672.5 1763.3,675 1763.3,681.5 1768.5,679" fill="#1aa2e6"/>
</svg>
<div class="btn" style="left:1787px;top:657px;width:38px;height:37px"></div>
<svg style="left:1787px;top:657px" width="38" height="37" viewBox="1787 657 38 37">
 <path d="M1803.2 685.8 L1797 677 A8.2 8.2 0 1 1 1809.5 677 Z" fill="#fff"/>
 <circle cx="1803.2" cy="671.5" r="2.6" fill="#1aa2e6"/>
 <circle cx="1812.5" cy="678.7" r="5.3" fill="#1aa2e6"/>
 <circle cx="1812.5" cy="678.7" r="3.4" fill="none" stroke="#fff" stroke-width="1.5"/>
 <path d="M1810 681.5 L1806.5 685.5" stroke="#fff" stroke-width="1.8"/>
</svg>
<div class="btn" style="left:1827px;top:657px;width:38px;height:37px"></div>
<svg style="left:1827px;top:657px" width="38" height="37" viewBox="1827 657 38 37">
 <path d="M1840.5 670.5 A7.6 7.6 0 1 1 1839.8 682" fill="none" stroke="#fff" stroke-width="2.8"/>
 <polygon points="1836.3,666.5 1844.5,668.5 1838.5,674.5" fill="#fff"/>
</svg>
<div class="btn" style="left:1867px;top:657px;width:38px;height:37px"></div>
<svg style="left:1867px;top:657px" width="38" height="37" viewBox="1867 657 38 37">
 <path d="M1878 676 L1884 682 L1894.5 670.5" fill="none" stroke="#fff" stroke-width="4"/>
</svg>
<div class="a" style="left:1168px;top:699px;width:657px;height:38px;background:#1b1d25;border-radius:6px"></div>
<svg style="left:1176px;top:704px" width="26" height="26" viewBox="1176 704 26 26">
 <circle cx="1191.6" cy="713.7" r="5.7" fill="none" stroke="#1aa2e6" stroke-width="1.7"/>
 <path d="M1187.6 718 L1180.5 724.5" stroke="#1aa2e6" stroke-width="2.8" stroke-linecap="round"/>
</svg>
<div class="t" style="left:1203.5px;top:710.2px;font-size:15.3px;color:#7d8089;">Find Property by Name</div>
<div class="btn" style="left:1827px;top:699px;width:38px;height:38px"></div>
<svg style="left:1827px;top:699px" width="38" height="38" viewBox="1827 699 38 38">
 <path d="M1839.5 707.8 L1849.8 707.8 L1854.3 712.3 L1854.3 726.3 L1839.5 726.3 Z" fill="none" stroke="#fff" stroke-width="1.4"/>
 <path d="M1849.5 708 L1849.5 712.5 L1854 712.5" fill="none" stroke="#fff" stroke-width="1.2"/>
 <path d="M1837.5 710 L1837.5 728.3 L1851.5 728.3" fill="none" stroke="#fff" stroke-width="1.8"/>
</svg>
<div class="btn" style="left:1867px;top:699px;width:38px;height:38px;background:#1f6189"></div>
<svg style="left:1867px;top:699px" width="38" height="38" viewBox="1867 699 38 38">
 <rect x="1879.4" y="711" width="13.3" height="16.3" fill="none" stroke="#1c2a35" stroke-width="1.4"/>
 <path d="M1881.5 711.5 L1881.5 709.5 L1890.5 709.5 L1890.5 711.5 Z" fill="#1c2a35"/>
 <circle cx="1886" cy="708.5" r="1.3" fill="none" stroke="#1c2a35" stroke-width="1"/>
</svg>
<div class="a" style="left:1910px;top:742px;width:5px;height:284px;background:#1e2028"></div>
<div class="a" style="left:1910px;top:742px;width:5px;height:81px;background:#1aa2e6"></div>
<svg style="left:1170px;top:751px" width="10" height="7" viewBox="0 0 10 7"><polygon points="0.5,0.8 9.3,0.8 4.9,6" fill="#1aa2e6"/></svg>
<div class="t" style="left:1188.2px;top:746.9px;font-size:16.5px;font-weight:bold;color:#1aa2e6;">Transform</div>
<div class="t" style="left:1186.4px;top:787.9px;font-size:17px;color:#e6e6e6;">Position</div>
<div class="t" style="left:1425.5px;top:789.3px;font-size:16px;font-weight:bold;color:#f03a3a;">X</div>
<div class="t" style="left:1576px;top:789.3px;font-size:16px;font-weight:bold;color:#6cc52a;">Y</div>
<div class="t" style="left:1725px;top:789.3px;font-size:16px;font-weight:bold;color:#1aa2e6;">Z</div>
<div class="a" style="left:1444px;top:779.4px;width:126.5px;height:32.5px;background:#1b1d25;border-radius:5px"></div>
<div class="t" style="left:1450.5px;top:788.4px;font-size:14.6px;color:#f0f0f0;">0</div>
<div class="a" style="left:1593.2px;top:779.4px;width:126.5px;height:32.5px;background:#1b1d25;border-radius:5px"></div>
<div class="t" style="left:1599.7px;top:788.4px;font-size:14.6px;color:#f0f0f0;">0</div>
<div class="a" style="left:1741px;top:779.4px;width:128px;height:32.5px;background:#1b1d25;border-radius:5px"></div>
<div class="t" style="left:1747.5px;top:788.4px;font-size:14.6px;color:#f0f0f0;">-50</div>
<svg style="left:1876px;top:786.4px" width="20" height="19" viewBox="0 0 20 19"><path d="M5 5.5 A6.3 6.3 0 1 1 5.2 14" fill="none" stroke="#3d414c" stroke-width="2.1"/><polygon points="2,3.3 8.3,3.5 5,8.6" fill="#3d414c"/></svg>
<div class="t" style="left:1186.4px;top:824.6px;font-size:17px;color:#e6e6e6;">Rotation</div>
<div class="t" style="left:1425.5px;top:826.0px;font-size:16px;font-weight:bold;color:#f03a3a;">X</div>
<div class="t" style="left:1576px;top:826.0px;font-size:16px;font-weight:bold;color:#6cc52a;">Y</div>
<div class="t" style="left:1725px;top:826.0px;font-size:16px;font-weight:bold;color:#1aa2e6;">Z</div>
<div class="a" style="left:1444px;top:817px;width:126.5px;height:32.5px;background:#1b1d25;border-radius:5px"></div>
<div class="t" style="left:1450.5px;top:826.0px;font-size:14.6px;color:#f0f0f0;">0</div>
<div class="a" style="left:1593.2px;top:817px;width:126.5px;height:32.5px;background:#1b1d25;border-radius:5px"></div>
<div class="t" style="left:1599.7px;top:826.0px;font-size:14.6px;color:#f0f0f0;">0</div>
<div class="a" style="left:1741px;top:817px;width:128px;height:32.5px;background:#1b1d25;border-radius:5px"></div>
<div class="t" style="left:1747.5px;top:826.0px;font-size:14.6px;color:#f0f0f0;">0</div>
<svg style="left:1876px;top:824px" width="20" height="19" viewBox="0 0 20 19"><path d="M5 5.5 A6.3 6.3 0 1 1 5.2 14" fill="none" stroke="#3d414c" stroke-width="2.1"/><polygon points="2,3.3 8.3,3.5 5,8.6" fill="#3d414c"/></svg>
<div class="t" style="left:1186.4px;top:863.0px;font-size:17px;color:#e6e6e6;">Scale</div>
<div class="t" style="left:1425.5px;top:864.4px;font-size:16px;font-weight:bold;color:#f03a3a;">X</div>
<div class="t" style="left:1576px;top:864.4px;font-size:16px;font-weight:bold;color:#6cc52a;">Y</div>
<div class="t" style="left:1725px;top:864.4px;font-size:16px;font-weight:bold;color:#1aa2e6;">Z</div>
<div class="a" style="left:1444px;top:854px;width:126.5px;height:32.5px;background:#1b1d25;border-radius:5px"></div>
<div class="t" style="left:1450.5px;top:863.0px;font-size:14.6px;color:#f0f0f0;">1.443</div>
<div class="a" style="left:1593.2px;top:854px;width:126.5px;height:32.5px;background:#1b1d25;border-radius:5px"></div>
<div class="t" style="left:1599.7px;top:863.0px;font-size:14.6px;color:#f0f0f0;">1.443</div>
<div class="a" style="left:1741px;top:854px;width:128px;height:32.5px;background:#1b1d25;border-radius:5px"></div>
<div class="t" style="left:1747.5px;top:863.0px;font-size:14.6px;color:#f0f0f0;">1.443</div>
<svg style="left:1876px;top:861px" width="20" height="19" viewBox="0 0 20 19"><path d="M5 5.5 A6.3 6.3 0 1 1 5.2 14" fill="none" stroke="#3d414c" stroke-width="2.1"/><polygon points="2,3.3 8.3,3.5 5,8.6" fill="#3d414c"/></svg>
<div class="a" style="left:1161px;top:889px;width:746px;height:3.7px;background:#1c1e25"></div>
<svg style="left:1170px;top:904px" width="10" height="7" viewBox="0 0 10 7"><polygon points="0.2,0.8 9.7,0.8 4.95,7" fill="#1aa2e6"/></svg>
<div class="t" style="left:1188.3px;top:901.3px;font-size:16.5px;font-weight:bold;color:#1aa2e6;">Scene</div>
<div class="t" style="left:1186.4px;top:941.2px;font-size:17px;color:#e6e6e6;">Game Collision</div>
<div class="btn" style="left:1424px;top:933px;width:182px;height:33.5px"></div>
<div class="t" style="left:1433.4px;top:940.9px;font-size:16.2px;font-weight:bold;color:#fff;">Inherit from Parent</div>
<div class="tri" style="left:1588px;top:946.5px;border-left-width:5.7px;border-right-width:5.7px;border-top-width:7px"></div>
<div class="t" style="left:1186.4px;top:979.1px;font-size:17px;color:#e6e6e6;">Inherited Game Collision</div>
<div class="a" style="left:1424px;top:972px;width:30px;height:29.5px;background:#20232b;border-radius:4px"></div>
<div class="t" style="left:1186.4px;top:1015.8px;font-size:17px;color:#e6e6e6;">Visibility</div>
<div class="btn" style="left:1424px;top:1008px;width:182px;height:33.5px"></div>
<div class="t" style="left:1433.4px;top:1015.7px;font-size:16.2px;font-weight:bold;color:#fff;">Inherit from Parent</div>
<div class="tri" style="left:1588px;top:1021.5px;border-left-width:5.7px;border-right-width:5.7px;border-top-width:7px"></div>
<svg style="left:1876px;top:941.5px" width="20" height="19" viewBox="0 0 20 19"><path d="M5 5.5 A6.3 6.3 0 1 1 5.2 14" fill="none" stroke="#3d414c" stroke-width="2.1"/><polygon points="2,3.3 8.3,3.5 5,8.6" fill="#3d414c"/></svg>
<svg style="left:1876px;top:979.5px" width="20" height="19" viewBox="0 0 20 19"><path d="M5 5.5 A6.3 6.3 0 1 1 5.2 14" fill="none" stroke="#3d414c" stroke-width="2.1"/><polygon points="2,3.3 8.3,3.5 5,8.6" fill="#3d414c"/></svg>
<svg style="left:1876px;top:1017px" width="20" height="19" viewBox="0 0 20 19"><path d="M5 5.5 A6.3 6.3 0 1 1 5.2 14" fill="none" stroke="#3d414c" stroke-width="2.1"/><polygon points="2,3.3 8.3,3.5 5,8.6" fill="#3d414c"/></svg>
<div class="a" style="left:1159px;top:1015px;width:759px;height:11px;background:linear-gradient(rgba(20,21,26,0),rgba(20,21,26,0.92))"></div>
<svg style="left:12px;top:854px" width="18" height="12" viewBox="0 0 18 12"><polygon points="0.8,0.9 17.3,0.9 9.05,11.5" fill="#fff"/></svg>
<div class="t" style="left:40.3px;top:853.4px;font-size:17px;color:#e6e6e6;">All Content</div>
<div class="t" style="left:56.4px;top:890.0px;font-size:17px;color:#e6e6e6;">My Templates</div>
<div class="t" style="left:56.4px;top:927.6px;font-size:17px;color:#1aa2e6;">My Scripts</div>
<div class="t" style="left:56.4px;top:965.2px;font-size:17px;color:#1aa2e6;">My Materials</div>
<div class="t" style="left:56.4px;top:1002.8px;font-size:17px;color:#1aa2e6;">My Binding Sets</div>
<div class="a" style="left:266px;top:844px;width:5px;height:182px;background:#1e2028"></div>
<div class="a" style="left:266px;top:844px;width:5px;height:119.5px;background:#1aa2e6"></div>
<div class="a" style="left:0;top:1017px;width:266px;height:9px;background:linear-gradient(rgba(20,21,26,0),rgba(20,21,26,0.9))"></div>
<div class="a" style="left:280px;top:842.5px;width:500px;height:36px;background:#1b1d25;border-radius:6px"></div>
<svg style="left:288px;top:848px" width="26" height="24" viewBox="288 848 26 24">
 <circle cx="303.6" cy="856.5" r="5.6" fill="none" stroke="#1aa2e6" stroke-width="1.7"/>
 <path d="M299.6 861 L292.5 867.5" stroke="#1aa2e6" stroke-width="2.8" stroke-linecap="round"/>
</svg>
<div class="t" style="left:315.4px;top:852.8px;font-size:15px;color:#7d8089;">Search</div>
<div class="a" style="left:281px;top:886px;width:30px;height:30px;background:#1c1f26"></div>
<svg style="left:281px;top:886px" width="30" height="30" viewBox="281 886 30 30">
 <path d="M288 896 A9.5 9.5 0 0 1 304 895.5 M305.5 902 A9.5 9.5 0 0 1 299 910 M293 910 A9.5 9.5 0 0 1 286.5 902" fill="none" stroke="#1aa2e6" stroke-width="1.9"/>
 <circle cx="287.7" cy="896.5" r="2" fill="#1aa2e6"/><circle cx="304.5" cy="896.5" r="2" fill="#1aa2e6"/><circle cx="296" cy="910.3" r="2" fill="#1aa2e6"/>
 <polygon points="296,896 300.5,898.2 296,900.4 291.5,898.2" fill="#1aa2e6"/>
 <polygon points="291.4,899.4 295.5,901.4 295.5,906.3 291.4,904.3" fill="#1aa2e6"/>
 <polygon points="300.6,899.4 296.5,901.4 296.5,906.3 300.6,904.3" fill="#1aa2e6"/>
</svg>
<div class="t" style="left:314.9px;top:893.2px;font-size:17px;color:#1aa2e6;">Bottle 1 Icon</div>
<div class="a" style="left:281px;top:918px;width:30px;height:30px;background:#1c1f26"></div>
<svg style="left:281px;top:918px" width="30" height="30" viewBox="281 918 30 30">
 <path d="M288 928 A9.5 9.5 0 0 1 304 927.5 M305.5 934 A9.5 9.5 0 0 1 299 942 M293 942 A9.5 9.5 0 0 1 286.5 934" fill="none" stroke="#1aa2e6" stroke-width="1.9"/>
 <circle cx="287.7" cy="928.5" r="2" fill="#1aa2e6"/><circle cx="304.5" cy="928.5" r="2" fill="#1aa2e6"/><circle cx="296" cy="942.3" r="2" fill="#1aa2e6"/>
 <polygon points="296,928 300.5,930.2 296,932.4 291.5,930.2" fill="#1aa2e6"/>
 <polygon points="291.4,931.4 295.5,933.4 295.5,938.3 291.4,936.3" fill="#1aa2e6"/>
 <polygon points="300.6,931.4 296.5,933.4 296.5,938.3 300.6,936.3" fill="#1aa2e6"/>
</svg>
<div class="t" style="left:314.9px;top:925.2px;font-size:17px;color:#1aa2e6;">Bottle 2 Icon</div>
<div class="a" style="left:281px;top:951px;width:30px;height:30px;background:#1c1f26"></div>
<svg style="left:281px;top:951px" width="30" height="30" viewBox="281 951 30 30">
 <path d="M288 961 A9.5 9.5 0 0 1 304 960.5 M305.5 967 A9.5 9.5 0 0 1 299 975 M293 975 A9.5 9.5 0 0 1 286.5 967" fill="none" stroke="#1aa2e6" stroke-width="1.9"/>
 <circle cx="287.7" cy="961.5" r="2" fill="#1aa2e6"/><circle cx="304.5" cy="961.5" r="2" fill="#1aa2e6"/><circle cx="296" cy="975.3" r="2" fill="#1aa2e6"/>
 <polygon points="296,961 300.5,963.2 296,965.4 291.5,963.2" fill="#1aa2e6"/>
 <polygon points="291.4,964.4 295.5,966.4 295.5,971.3 291.4,969.3" fill="#1aa2e6"/>
 <polygon points="300.6,964.4 296.5,966.4 296.5,971.3 300.6,969.3" fill="#1aa2e6"/>
</svg>
<div class="t" style="left:314.9px;top:958.2px;font-size:17px;color:#1aa2e6;">Bottle 3 Icon</div>
<div class="t" style="left:280.6px;top:1001.0px;font-size:15px;color:#e6e6e6;">3 Items</div>
<div class="btn" style="left:903px;top:842px;width:38px;height:36.5px"></div>
<svg style="left:903px;top:842px" width="38" height="37" viewBox="903 842 38 37">
 <path d="M911.5 869 L911.5 851.5 L918 851.5 L920 853.8 L931 853.8 L931 856" fill="none" stroke="#fff" stroke-width="1.6"/>
 <path d="M915.5 857.5 L935 857.5 L932 869.5 L911.5 869.5 Z" fill="#fff"/>
</svg>
<div class="btn" style="left:946px;top:842px;width:56px;height:36.5px"></div>
<svg style="left:946px;top:842px" width="56" height="37" viewBox="946 842 56 37">
 <path d="M955.5 852 L972.5 852 L966 861 L962 861 Z" fill="#fff"/>
 <path d="M962 863 L966 863 L966 867 L962 870.5 Z" fill="#fff"/>
 <polygon points="984.5,856.8 995,856.8 989.75,862.5" fill="#fff"/>
</svg>
<div class="btn" style="left:1007px;top:842px;width:144px;height:36.5px;background:#1f6189"></div>
<div class="t" style="left:1016px;top:852.9px;font-size:16.3px;font-weight:bold;color:#252830;">Publish Content</div>
<div class="btn" style="left:1113px;top:990px;width:38px;height:40px"></div>
<svg style="left:1113px;top:990px" width="38" height="36" viewBox="1113 990 38 36">
 <g fill="#fff">
 <rect x="1122" y="999" width="4.5" height="4.5"/><rect x="1129.5" y="999" width="4.5" height="4.5"/><rect x="1137" y="999" width="4.5" height="4.5"/>
 <rect x="1122" y="1006" width="4.5" height="4.5"/><rect x="1129.5" y="1006" width="4.5" height="4.5"/><rect x="1137" y="1006" width="4.5" height="4.5"/>
 <rect x="1122" y="1013" width="4.5" height="4.5"/><rect x="1129.5" y="1013" width="4.5" height="4.5"/><rect x="1137" y="1013" width="4.5" height="4.5"/>
 </g>
</svg>
<div class="a" style="left:1153px;top:838px;width:6px;height:188px;background:#1c1e25"></div>
</body></html>
